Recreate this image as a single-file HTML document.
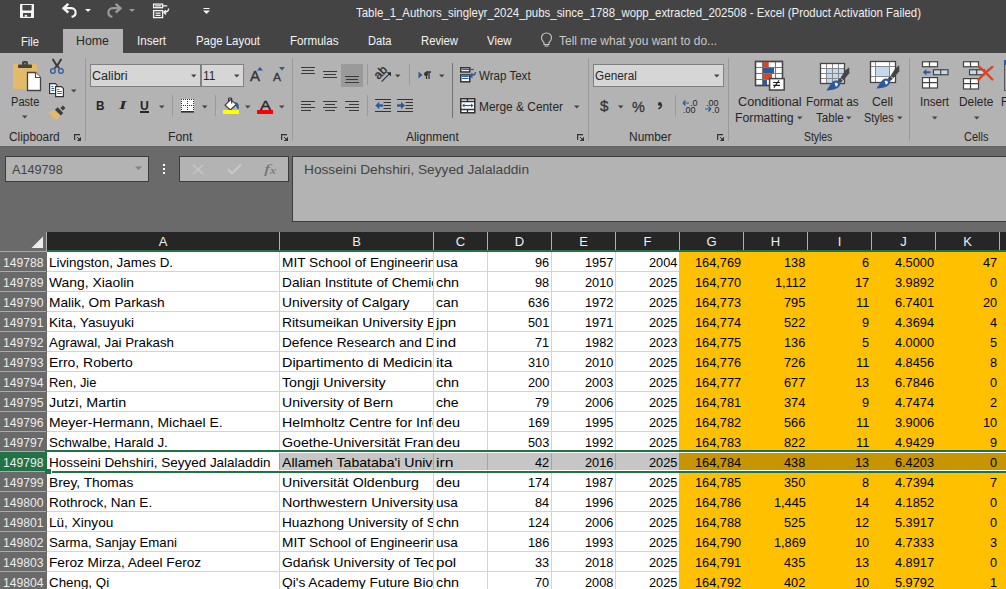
<!DOCTYPE html>
<html><head><meta charset="utf-8"><style>
html,body{margin:0;padding:0;}
body{width:1006px;height:589px;overflow:hidden;position:relative;background:#6a6a6a;font-family:"Liberation Sans",sans-serif;}
div{position:absolute;}
.t{white-space:pre;}
</style></head><body>
<div style="left:0px;top:0px;width:1006px;height:53px;background:#444444;"></div>
<svg style="position:absolute;left:20px;top:4px" width="14" height="14" viewBox="0 0 14 14"><rect x="0" y="0" width="14" height="14" rx="0.5" fill="#f4f4f4"/>
<path d="M2.4 1H11.6V5.4Q11.6 6.4 10.6 6.4H3.4Q2.4 6.4 2.4 5.4Z" fill="#444"/>
<rect x="3" y="9" width="8" height="3.8" fill="#444"/>
<rect x="4.7" y="10.9" width="2.4" height="1.9" fill="#f4f4f4"/></svg>
<svg style="position:absolute;left:62px;top:2px" width="16" height="17" viewBox="0 0 16 17"><path d="M3 6.2H9.3C11.9 6.2 13.6 8.2 13.6 10.4C13.6 12.7 12 14.4 9.6 14.9" fill="none" stroke="#f4f4f4" stroke-width="2.2"/>
<path d="M6.3 1.8L1.6 6.2L6.3 10.6" fill="none" stroke="#f4f4f4" stroke-width="2.5"/></svg>
<svg style="position:absolute;left:85px;top:9px" width="7" height="4" viewBox="0 0 7 4"><path d="M0 0H6L3 3Z" fill="#f4f4f4"/></svg>
<svg style="position:absolute;left:106px;top:2px" width="16" height="17" viewBox="0 0 16 17"><path d="M13 6.2H6.7C4.1 6.2 2.4 8.2 2.4 10.4C2.4 12.7 4 14.4 6.4 14.9" fill="none" stroke="#9a9a9a" stroke-width="2.2"/>
<path d="M9.7 1.8L14.4 6.2L9.7 10.6" fill="none" stroke="#9a9a9a" stroke-width="2.5"/></svg>
<svg style="position:absolute;left:129px;top:9px" width="7" height="4" viewBox="0 0 7 4"><path d="M0 0H6L3 3Z" fill="#9a9a9a"/></svg>
<svg style="position:absolute;left:152px;top:3px" width="18" height="16" viewBox="0 0 18 16"><rect x="1.6" y="1.1" width="9" height="3.6" fill="none" stroke="#f4f4f4" stroke-width="1.3"/>
<path d="M3.2 2.9H9M10.5 2.9H15.2" stroke="#f4f4f4" stroke-width="1.2"/>
<rect x="1.6" y="7.6" width="9" height="7" fill="none" stroke="#f4f4f4" stroke-width="1.3"/>
<path d="M3.5 10.1H8.6M3.5 12.3H8.6" stroke="#f4f4f4" stroke-width="1.2"/>
<path d="M16.6 5.5C16.6 8.4 15.2 9.3 12 9.3M14 7.1L11.8 9.3L14 11.5" fill="none" stroke="#f4f4f4" stroke-width="1.3"/></svg>
<svg style="position:absolute;left:203px;top:7px" width="7" height="8" viewBox="0 0 7 8"><path d="M0.5 1.5H6.5" stroke="#f4f4f4" stroke-width="1"/><path d="M0 3.5H7L3.5 7Z" fill="#f4f4f4"/></svg>
<div class="t" style="left:356.00px;top:7.16px;font-size:12.8px;line-height:12.8px;color:#f0f0f0;font-family:'Liberation Sans';font-weight:normal;font-style:normal;transform:scaleX(0.8924);transform-origin:0 0;">Table_1_Authors_singleyr_2024_pubs_since_1788_wopp_extracted_202508 - Excel (Product Activation Failed)</div>
<div style="left:63px;top:29px;width:60px;height:24px;background:#b3b3b3;"></div>
<div class="t" style="left:21.00px;top:35.84px;font-size:12px;line-height:12px;color:#f4f4f4;font-family:'Liberation Sans';font-weight:normal;font-style:normal;transform:scaleX(0.9305);transform-origin:0 0;">File</div>
<div class="t" style="left:76.00px;top:34.84px;font-size:12px;line-height:12px;color:#262626;font-family:'Liberation Sans';font-weight:normal;font-style:normal;transform:scaleX(1.0307);transform-origin:0 0;">Home</div>
<div class="t" style="left:136.70px;top:34.84px;font-size:12px;line-height:12px;color:#f4f4f4;font-family:'Liberation Sans';font-weight:normal;font-style:normal;transform:scaleX(0.9662);transform-origin:0 0;">Insert</div>
<div class="t" style="left:196.00px;top:34.84px;font-size:12px;line-height:12px;color:#f4f4f4;font-family:'Liberation Sans';font-weight:normal;font-style:normal;transform:scaleX(0.9497);transform-origin:0 0;">Page Layout</div>
<div class="t" style="left:290.00px;top:34.84px;font-size:12px;line-height:12px;color:#f4f4f4;font-family:'Liberation Sans';font-weight:normal;font-style:normal;transform:scaleX(0.9697);transform-origin:0 0;">Formulas</div>
<div class="t" style="left:368.00px;top:34.84px;font-size:12px;line-height:12px;color:#f4f4f4;font-family:'Liberation Sans';font-weight:normal;font-style:normal;transform:scaleX(0.9267);transform-origin:0 0;">Data</div>
<div class="t" style="left:421.00px;top:34.84px;font-size:12px;line-height:12px;color:#f4f4f4;font-family:'Liberation Sans';font-weight:normal;font-style:normal;transform:scaleX(0.9401);transform-origin:0 0;">Review</div>
<div class="t" style="left:487.00px;top:34.84px;font-size:12px;line-height:12px;color:#f4f4f4;font-family:'Liberation Sans';font-weight:normal;font-style:normal;transform:scaleX(0.9497);transform-origin:0 0;">View</div>
<svg style="position:absolute;left:540px;top:32px" width="13" height="16" viewBox="0 0 13 16"><path d="M6.5 1C3.5 1 1.5 3.2 1.5 6C1.5 8.2 3 9.3 4 10.5V12.5H9V10.5C10 9.3 11.5 8.2 11.5 6C11.5 3.2 9.5 1 6.5 1Z" fill="none" stroke="#c8c8c8" stroke-width="1.1"/>
<path d="M4.5 14H8.5" stroke="#c8c8c8" stroke-width="1.1"/></svg>
<div class="t" style="left:559.00px;top:34.84px;font-size:12px;line-height:12px;color:#c8c8c8;font-family:'Liberation Sans';font-weight:normal;font-style:normal;">Tell me what you want to do...</div>
<div style="left:0px;top:53px;width:1006px;height:93px;background:#b3b3b3;"></div>
<div style="left:85px;top:58px;width:1px;height:83px;background:#999999;"></div>
<div style="left:292px;top:58px;width:1px;height:83px;background:#999999;"></div>
<div style="left:588px;top:58px;width:1px;height:83px;background:#999999;"></div>
<div style="left:728px;top:58px;width:1px;height:83px;background:#999999;"></div>
<div style="left:909px;top:58px;width:1px;height:83px;background:#999999;"></div>
<div class="t" style="left:8.70px;top:130.84px;font-size:12px;line-height:12px;color:#262626;font-family:'Liberation Sans';font-weight:normal;font-style:normal;transform:scaleX(0.9869);transform-origin:0 0;">Clipboard</div>
<div class="t" style="left:168.20px;top:130.84px;font-size:12px;line-height:12px;color:#262626;font-family:'Liberation Sans';font-weight:normal;font-style:normal;transform:scaleX(1.0202);transform-origin:0 0;">Font</div>
<div class="t" style="left:406.00px;top:130.84px;font-size:12px;line-height:12px;color:#262626;font-family:'Liberation Sans';font-weight:normal;font-style:normal;transform:scaleX(0.9874);transform-origin:0 0;">Alignment</div>
<div class="t" style="left:629.20px;top:130.84px;font-size:12px;line-height:12px;color:#262626;font-family:'Liberation Sans';font-weight:normal;font-style:normal;transform:scaleX(0.9956);transform-origin:0 0;">Number</div>
<div class="t" style="left:804.30px;top:130.84px;font-size:12px;line-height:12px;color:#262626;font-family:'Liberation Sans';font-weight:normal;font-style:normal;transform:scaleX(0.8658);transform-origin:0 0;">Styles</div>
<div class="t" style="left:964.20px;top:130.84px;font-size:12px;line-height:12px;color:#262626;font-family:'Liberation Sans';font-weight:normal;font-style:normal;transform:scaleX(0.9148);transform-origin:0 0;">Cells</div>
<svg style="position:absolute;left:74px;top:134px" width="8" height="8" viewBox="0 0 8 8"><path d="M0.6 6V0.6H6" fill="none" stroke="#333" stroke-width="1.2"/><path d="M7 2.8V7H2.8Z" fill="#333"/><path d="M3 3L7 7" stroke="#333" stroke-width="1"/></svg>
<svg style="position:absolute;left:281px;top:134px" width="8" height="8" viewBox="0 0 8 8"><path d="M0.6 6V0.6H6" fill="none" stroke="#333" stroke-width="1.2"/><path d="M7 2.8V7H2.8Z" fill="#333"/><path d="M3 3L7 7" stroke="#333" stroke-width="1"/></svg>
<svg style="position:absolute;left:577px;top:134px" width="8" height="8" viewBox="0 0 8 8"><path d="M0.6 6V0.6H6" fill="none" stroke="#333" stroke-width="1.2"/><path d="M7 2.8V7H2.8Z" fill="#333"/><path d="M3 3L7 7" stroke="#333" stroke-width="1"/></svg>
<svg style="position:absolute;left:717px;top:134px" width="8" height="8" viewBox="0 0 8 8"><path d="M0.6 6V0.6H6" fill="none" stroke="#333" stroke-width="1.2"/><path d="M7 2.8V7H2.8Z" fill="#333"/><path d="M3 3L7 7" stroke="#333" stroke-width="1"/></svg>
<svg style="position:absolute;left:10px;top:58px" width="34" height="36" viewBox="0 0 34 36"><rect x="3" y="6" width="24" height="25" rx="1.2" fill="#e3b96a"/>
<rect x="8" y="6.5" width="14" height="3.5" rx="1" fill="#444"/>
<rect x="12" y="3" width="6" height="4.5" rx="1.5" fill="#444"/>
<circle cx="15" cy="5.6" r="0.9" fill="#888"/>
<path d="M17.5 14.5H25.5L30.5 19.5V32.5H17.5Z" fill="#fff" stroke="#444" stroke-width="1.3"/>
<path d="M25.5 14.5V19.5H30.5" fill="#fff" stroke="#444" stroke-width="1.1"/></svg>
<div class="t" style="left:10.70px;top:95.84px;font-size:12px;line-height:12px;color:#262626;font-family:'Liberation Sans';font-weight:normal;font-style:normal;transform:scaleX(0.9222);transform-origin:0 0;">Paste</div>
<svg style="position:absolute;left:22px;top:115px" width="6" height="4" viewBox="0 0 6 4"><path d="M0 0.5H5.5L2.75 3.5Z" fill="#444"/></svg>
<svg style="position:absolute;left:45px;top:55px" width="25" height="25" viewBox="0 0 25 25"><path d="M8 4.5L12.3 11.5M16 4.5L11.7 11.5" stroke="#3a3a3a" stroke-width="2" stroke-linecap="round"/>
<path d="M12 10.5L9.5 13.5M12 10.5L14.5 13.5" stroke="#3a3a3a" stroke-width="1.6"/>
<circle cx="7.9" cy="16" r="2.3" fill="none" stroke="#2b5a9e" stroke-width="1.3"/>
<circle cx="15.9" cy="16" r="2.3" fill="none" stroke="#2b5a9e" stroke-width="1.3"/></svg>
<svg style="position:absolute;left:49px;top:83px" width="16" height="15" viewBox="0 0 16 15"><path d="M0.6 0.6H6.4L8 2.2V10.5H0.6Z" fill="#fff" stroke="#333" stroke-width="1.2"/>
<path d="M2.3 3.5H4.3M2.3 5.5H5.3M2.3 7.5H5.3" stroke="#2b5a9e" stroke-width="0.9"/>
<path d="M6.6 3.6H12.4L14.4 5.6V13.6H6.6Z" fill="#fff" stroke="#333" stroke-width="1.2"/>
<path d="M8.2 6.5H10.3M8.2 8.5H12.8M8.2 10.5H12.8" stroke="#2b5a9e" stroke-width="0.9"/></svg>
<svg style="position:absolute;left:71px;top:89px" width="6" height="4" viewBox="0 0 6 4"><path d="M0 0.5H5.5L2.75 3.5Z" fill="#444"/></svg>
<svg style="position:absolute;left:44px;top:100px" width="26" height="22" viewBox="0 0 26 22"><path d="M16.4 8L18.9 5.5L21.4 8L18.8 10.6Z" fill="#3d3d3d"/>
<path d="M10.9 9.7L13.7 7.3L19.3 12.9L16.8 15.6Z" fill="#3d3d3d"/>
<path d="M5 12.3L10.5 10.2L16.5 16.1L12.4 20.2L11.4 18.6L9.8 19L6.8 15.5Z" fill="#e3b96a"/></svg>
<div style="left:90px;top:64px;width:111px;height:23px;background:#808080;"></div>
<div style="left:91px;top:65px;width:109px;height:21px;background:#d6d6d6;"></div>
<div style="left:201px;top:64px;width:43px;height:23px;background:#808080;"></div>
<div style="left:202px;top:65px;width:41px;height:21px;background:#d6d6d6;"></div>
<div class="t" style="left:92.20px;top:69.84px;font-size:12px;line-height:12px;color:#262626;font-family:'Liberation Sans';font-weight:normal;font-style:normal;transform:scaleX(1.0466);transform-origin:0 0;">Calibri</div>
<svg style="position:absolute;left:191px;top:74px" width="6" height="4" viewBox="0 0 6 4"><path d="M0 0.5H5.5L2.75 3.5Z" fill="#444"/></svg>
<div class="t" style="left:203.20px;top:69.84px;font-size:12px;line-height:12px;color:#262626;font-family:'Liberation Sans';font-weight:normal;font-style:normal;transform:scaleX(0.9945);transform-origin:0 0;">11</div>
<svg style="position:absolute;left:234px;top:74px" width="6" height="4" viewBox="0 0 6 4"><path d="M0 0.5H5.5L2.75 3.5Z" fill="#444"/></svg>
<div class="t" style="left:249.50px;top:69.15px;font-size:14px;line-height:14px;color:#333;font-family:'Liberation Sans';font-weight:normal;font-style:normal;transform:scaleX(1.0702);transform-origin:0 0;-webkit-text-stroke:0.35px #333;">A</div>
<svg style="position:absolute;left:257px;top:67px" width="7" height="4" viewBox="0 0 7 4"><path d="M0 3.5H6L3 0Z" fill="#2b5a9e"/></svg>
<div class="t" style="left:272.50px;top:71.69px;font-size:11px;line-height:11px;color:#333;font-family:'Liberation Sans';font-weight:normal;font-style:normal;transform:scaleX(1.0894);transform-origin:0 0;-webkit-text-stroke:0.3px #333;">A</div>
<svg style="position:absolute;left:279px;top:67px" width="7" height="4" viewBox="0 0 7 4"><path d="M0 0H6L3 3.5Z" fill="#2b5a9e"/></svg>
<div class="t" style="left:96.00px;top:99.84px;font-size:12px;line-height:12px;color:#262626;font-family:'Liberation Sans';font-weight:bold;font-style:normal;transform:scaleX(0.9802);transform-origin:0 0;">B</div>
<div class="t" style="left:118.50px;top:99.42px;font-size:12.5px;line-height:12.5px;color:#262626;font-family:'Liberation Serif';font-weight:bold;font-style:italic;transform:scaleX(1.5385);transform-origin:0 0;">I</div>
<div class="t" style="left:140.00px;top:99.84px;font-size:12px;line-height:12px;color:#262626;font-family:'Liberation Sans';font-weight:bold;font-style:normal;transform:scaleX(1.0148);transform-origin:0 0;">U</div>
<div style="left:140px;top:111px;width:9px;height:1.5px;background:#262626;"></div>
<svg style="position:absolute;left:159px;top:105px" width="6" height="4" viewBox="0 0 6 4"><path d="M0 0.5H5.5L2.75 3.5Z" fill="#444"/></svg>
<div style="left:172px;top:95px;width:1px;height:21px;background:#999999;"></div>
<svg style="position:absolute;left:180px;top:98px" width="15" height="15" viewBox="0 0 15 15"><rect x="1" y="1" width="13" height="13" fill="#fff"/><rect x="1" y="1" width="1" height="1" fill="#333"/><rect x="1" y="3" width="1" height="1" fill="#333"/><rect x="1" y="5" width="1" height="1" fill="#333"/><rect x="1" y="7" width="1" height="1" fill="#333"/><rect x="1" y="9" width="1" height="1" fill="#333"/><rect x="1" y="11" width="1" height="1" fill="#333"/><rect x="3" y="1" width="1" height="1" fill="#333"/><rect x="3" y="7" width="1" height="1" fill="#333"/><rect x="5" y="1" width="1" height="1" fill="#333"/><rect x="5" y="7" width="1" height="1" fill="#333"/><rect x="7" y="1" width="1" height="1" fill="#333"/><rect x="7" y="3" width="1" height="1" fill="#333"/><rect x="7" y="5" width="1" height="1" fill="#333"/><rect x="7" y="7" width="1" height="1" fill="#333"/><rect x="7" y="9" width="1" height="1" fill="#333"/><rect x="7" y="11" width="1" height="1" fill="#333"/><rect x="9" y="1" width="1" height="1" fill="#333"/><rect x="9" y="7" width="1" height="1" fill="#333"/><rect x="11" y="1" width="1" height="1" fill="#333"/><rect x="11" y="7" width="1" height="1" fill="#333"/><rect x="13" y="1" width="1" height="1" fill="#333"/><rect x="13" y="3" width="1" height="1" fill="#333"/><rect x="13" y="5" width="1" height="1" fill="#333"/><rect x="13" y="7" width="1" height="1" fill="#333"/><rect x="13" y="9" width="1" height="1" fill="#333"/><rect x="13" y="11" width="1" height="1" fill="#333"/><rect x="1" y="13" width="13" height="1.6" fill="#333"/></svg>
<svg style="position:absolute;left:202px;top:105px" width="6" height="4" viewBox="0 0 6 4"><path d="M0 0.5H5.5L2.75 3.5Z" fill="#444"/></svg>
<div style="left:215px;top:95px;width:1px;height:21px;background:#999999;"></div>
<svg style="position:absolute;left:220px;top:94px" width="22" height="22" viewBox="0 0 22 22"><path d="M5.1 11.2L10.6 5.7L16.3 10.4L10.3 15.9Z" fill="#fff" stroke="#333" stroke-width="1.1"/>
<path d="M8.6 7.8V4.8Q8.6 4 9.4 4H10.9Q11.7 4 11.7 4.8V9.6" fill="none" stroke="#333" stroke-width="1.2"/>
<path d="M15.2 8C18 8.3 19.5 11 18.6 15.3C17.2 15 16.2 13 15.8 11.3Z" fill="#2b5a9e"/>
<rect x="3" y="16" width="16" height="4" fill="#ffff00"/></svg>
<svg style="position:absolute;left:245px;top:105px" width="6" height="4" viewBox="0 0 6 4"><path d="M0 0.5H5.5L2.75 3.5Z" fill="#444"/></svg>
<div class="t" style="left:259.50px;top:99.00px;font-size:13px;line-height:13px;color:#262626;font-family:'Liberation Sans';font-weight:normal;font-style:normal;transform:scaleX(1.2685);transform-origin:0 0;-webkit-text-stroke:0.35px #262626;">A</div>
<div style="left:257px;top:110px;width:16px;height:4px;background:#ff0000;"></div>
<svg style="position:absolute;left:279px;top:105px" width="6" height="4" viewBox="0 0 6 4"><path d="M0 0.5H5.5L2.75 3.5Z" fill="#444"/></svg>
<div style="left:341px;top:64px;width:22px;height:23px;background:#9a9a9a;"></div>
<div style="left:301px;top:67px;width:14px;height:1px;background:#3a3a3a;"></div>
<div style="left:302px;top:70px;width:12px;height:1px;background:#3a3a3a;"></div>
<div style="left:301px;top:73px;width:14px;height:1px;background:#3a3a3a;"></div>
<div style="left:323px;top:71px;width:14px;height:1px;background:#3a3a3a;"></div>
<div style="left:324px;top:74px;width:12px;height:1px;background:#3a3a3a;"></div>
<div style="left:323px;top:77px;width:14px;height:1px;background:#3a3a3a;"></div>
<div style="left:345px;top:76px;width:14px;height:1px;background:#3a3a3a;"></div>
<div style="left:346px;top:79px;width:12px;height:1px;background:#3a3a3a;"></div>
<div style="left:345px;top:82px;width:14px;height:1px;background:#3a3a3a;"></div>
<div style="left:367px;top:64px;width:1px;height:21px;background:#999999;"></div>
<svg style="position:absolute;left:370px;top:62px" width="24" height="24" viewBox="0 0 24 24"><g transform="translate(8.5 18) rotate(-45)"><text x="0" y="0" font-family="Liberation Sans" font-size="12" fill="#2a2a2a" stroke="#2a2a2a" stroke-width="0.35">ab</text></g>
<path d="M11.6 19.6L19.8 11.4" stroke="#2a2a2a" stroke-width="1.1"/><path d="M16.6 10.2H21V14.6Z" fill="#2a2a2a"/></svg>
<svg style="position:absolute;left:395px;top:74px" width="6" height="4" viewBox="0 0 6 4"><path d="M0 0.5H5.5L2.75 3.5Z" fill="#444"/></svg>
<div style="left:409px;top:64px;width:1px;height:21px;background:#999999;"></div>
<svg style="position:absolute;left:418px;top:71px" width="14" height="9" viewBox="0 0 14 9"><path d="M0.5 0.5L4.5 4L0.5 7.5Z" fill="#2b5a9e"/>
<path d="M8 1H13M8.5 1V8M11 1V8" stroke="#333" stroke-width="1.3"/><circle cx="8" cy="3" r="2" fill="#333"/></svg>
<svg style="position:absolute;left:439px;top:74px" width="6" height="4" viewBox="0 0 6 4"><path d="M0 0.5H5.5L2.75 3.5Z" fill="#444"/></svg>
<div style="left:301px;top:101px;width:14px;height:1px;background:#3a3a3a;"></div>
<div style="left:301px;top:104px;width:10px;height:1px;background:#3a3a3a;"></div>
<div style="left:301px;top:107px;width:14px;height:1px;background:#3a3a3a;"></div>
<div style="left:301px;top:110px;width:10px;height:1px;background:#3a3a3a;"></div>
<div style="left:323px;top:101px;width:14px;height:1px;background:#3a3a3a;"></div>
<div style="left:325px;top:104px;width:10px;height:1px;background:#3a3a3a;"></div>
<div style="left:323px;top:107px;width:14px;height:1px;background:#3a3a3a;"></div>
<div style="left:325px;top:110px;width:10px;height:1px;background:#3a3a3a;"></div>
<div style="left:345px;top:101px;width:14px;height:1px;background:#3a3a3a;"></div>
<div style="left:349px;top:104px;width:10px;height:1px;background:#3a3a3a;"></div>
<div style="left:345px;top:107px;width:14px;height:1px;background:#3a3a3a;"></div>
<div style="left:349px;top:110px;width:10px;height:1px;background:#3a3a3a;"></div>
<div style="left:367px;top:95px;width:1px;height:21px;background:#999999;"></div>
<svg style="position:absolute;left:375px;top:99px" width="17" height="14" viewBox="0 0 17 14"><path d="M0 0.5H16M8.5 3.5H16M8.5 6.5H16M8.5 9.5H16M0 12.5H16" stroke="#333" stroke-width="1"/>
<path d="M3.5 6.5H8" stroke="#2b5a9e" stroke-width="2.4"/><path d="M0.3 6.5L4.3 2.8V10.2Z" fill="#2b5a9e"/></svg>
<svg style="position:absolute;left:397px;top:99px" width="17" height="14" viewBox="0 0 17 14"><path d="M0 0.5H16M8.5 3.5H16M8.5 6.5H16M8.5 9.5H16M0 12.5H16" stroke="#333" stroke-width="1"/>
<path d="M0 6.5H4.5" stroke="#2b5a9e" stroke-width="2.4"/><path d="M8 6.5L4 2.8V10.2Z" fill="#2b5a9e"/></svg>
<div style="left:452px;top:63px;width:1px;height:55px;background:#707070;"></div>
<svg style="position:absolute;left:459px;top:66px" width="18" height="17" viewBox="0 0 18 17"><rect x="1.75" y="1.75" width="9" height="4.2" fill="#fff" stroke="#333" stroke-width="1.5"/>
<path d="M3 3.5H15" stroke="#2b5a9e" stroke-width="1.2"/>
<rect x="1.75" y="8.9" width="9" height="6.9" fill="#fff" stroke="#333" stroke-width="1.5"/>
<path d="M3 10.5H9.5M3 12.5H9.5" stroke="#2b5a9e" stroke-width="1"/>
<path d="M16.5 6C16.5 8.5 15 9.5 11.5 9.5M13.5 7.3L11.2 9.5L13.5 11.7" fill="none" stroke="#2b5a9e" stroke-width="1.4"/></svg>
<div class="t" style="left:478.70px;top:69.84px;font-size:12px;line-height:12px;color:#262626;font-family:'Liberation Sans';font-weight:normal;font-style:normal;transform:scaleX(0.9631);transform-origin:0 0;">Wrap Text</div>
<svg style="position:absolute;left:459px;top:97px" width="17" height="17" viewBox="0 0 17 17"><rect x="1.75" y="1.75" width="14" height="14" fill="#fff" stroke="#333" stroke-width="1.5"/>
<path d="M1.5 4.5H16M1.5 12.5H16M8.5 1.5V4.5M8.5 12.5V16" stroke="#333" stroke-width="1.4"/>
<path d="M4 8.5H13.5" stroke="#2b5a9e" stroke-width="1.2"/><path d="M3 8.5L5.5 6.5V10.5Z M14.5 8.5L12 6.5V10.5Z" fill="#2b5a9e"/></svg>
<div class="t" style="left:479.20px;top:100.84px;font-size:12px;line-height:12px;color:#262626;font-family:'Liberation Sans';font-weight:normal;font-style:normal;transform:scaleX(0.9917);transform-origin:0 0;">Merge &amp; Center</div>
<svg style="position:absolute;left:574px;top:105px" width="6" height="4" viewBox="0 0 6 4"><path d="M0 0.5H5.5L2.75 3.5Z" fill="#444"/></svg>
<div style="left:593px;top:64px;width:131px;height:23px;background:#808080;"></div>
<div style="left:594px;top:65px;width:129px;height:21px;background:#d6d6d6;"></div>
<div class="t" style="left:595.20px;top:69.84px;font-size:12px;line-height:12px;color:#262626;font-family:'Liberation Sans';font-weight:normal;font-style:normal;transform:scaleX(0.9789);transform-origin:0 0;">General</div>
<svg style="position:absolute;left:714px;top:74px" width="6" height="4" viewBox="0 0 6 4"><path d="M0 0.5H5.5L2.75 3.5Z" fill="#444"/></svg>
<div class="t" style="left:600.00px;top:98.30px;font-size:15px;line-height:15px;color:#333;font-family:'Liberation Sans';font-weight:normal;font-style:normal;transform:scaleX(1.0187);transform-origin:0 0;-webkit-text-stroke:0.3px #333;">$</div>
<svg style="position:absolute;left:618px;top:105px" width="6" height="4" viewBox="0 0 6 4"><path d="M0 0.5H5.5L2.75 3.5Z" fill="#444"/></svg>
<div class="t" style="left:632.00px;top:98.88px;font-size:15.5px;line-height:15.5px;color:#333;font-family:'Liberation Sans';font-weight:normal;font-style:normal;transform:scaleX(0.9277);transform-origin:0 0;-webkit-text-stroke:0.3px #333;">%</div>
<svg style="position:absolute;left:656px;top:101px" width="8" height="9" viewBox="0 0 8 9"><circle cx="3.8" cy="2.9" r="1.9" fill="#333"/><path d="M5.4 3C5.6 5.5 4.5 7 2.3 7.8" fill="none" stroke="#333" stroke-width="1.5"/></svg>
<div style="left:675px;top:95px;width:1px;height:21px;background:#999999;"></div>
<svg style="position:absolute;left:682px;top:99px" width="16" height="14" viewBox="0 0 16 14"><path d="M1 4H7M1 4L3.5 1.5M1 4L3.5 6.5" fill="none" stroke="#2b5a9e" stroke-width="1.2"/>
<text x="8" y="7" font-family="Liberation Sans" font-size="9" fill="#262626">.0</text>
<text x="1" y="13.5" font-family="Liberation Sans" font-size="9" fill="#262626">.00</text></svg>
<svg style="position:absolute;left:704px;top:99px" width="16" height="14" viewBox="0 0 16 14"><text x="2" y="7" font-family="Liberation Sans" font-size="9" fill="#262626">.00</text>
<path d="M1 10H7M7 10L4.5 7.5M7 10L4.5 12.5" fill="none" stroke="#2b5a9e" stroke-width="1.2"/>
<text x="8" y="13.5" font-family="Liberation Sans" font-size="9" fill="#262626">.0</text></svg>
<svg style="position:absolute;left:754px;top:60px" width="32" height="32" viewBox="0 0 32 32"><rect x="1.5" y="1.5" width="27" height="24" fill="#fff" stroke="#444" stroke-width="1.3"/>
<path d="M1.5 7.5H28.5M1.5 13.5H28.5M1.5 19.5H28.5M8.5 1.5V25.5M21.5 1.5V25.5" stroke="#777" stroke-width="1.1"/>
<path d="M1.5 1.5H28.5V25.5H1.5Z" fill="none" stroke="#444" stroke-width="1.3"/>
<rect x="9" y="2" width="5.7" height="5" fill="#d24726"/>
<rect x="9" y="8" width="11" height="5" fill="#2b5a9e"/>
<rect x="9" y="14" width="9" height="5" fill="#d24726"/>
<rect x="9" y="20" width="4" height="5.5" fill="#2b5a9e"/>
<rect x="15.6" y="18.6" width="14.6" height="11.4" fill="#fff" stroke="#444" stroke-width="1.5"/>
<path d="M19.2 22.5H26M19.2 25.4H26M25 20.2L19.9 27.6" stroke="#222" stroke-width="1.1"/></svg>
<div class="t" style="left:738.30px;top:95.84px;font-size:12px;line-height:12px;color:#262626;font-family:'Liberation Sans';font-weight:normal;font-style:normal;transform:scaleX(1.0592);transform-origin:0 0;">Conditional</div>
<div class="t" style="left:735.40px;top:111.84px;font-size:12px;line-height:12px;color:#262626;font-family:'Liberation Sans';font-weight:normal;font-style:normal;transform:scaleX(1.0216);transform-origin:0 0;">Formatting</div>
<svg style="position:absolute;left:797px;top:116px" width="6" height="4" viewBox="0 0 6 4"><path d="M0 0.5H5.5L2.75 3.5Z" fill="#444"/></svg>
<svg style="position:absolute;left:819px;top:62px" width="32" height="31" viewBox="0 0 32 31"><rect x="1.5" y="1.5" width="24" height="20" fill="#fff"/><rect x="7" y="6" width="6" height="5" fill="#c5d9ee"/><rect x="7" y="11" width="6" height="5" fill="#c5d9ee"/><rect x="7" y="16" width="6" height="5" fill="#c5d9ee"/><rect x="13" y="6" width="6" height="5" fill="#c5d9ee"/><rect x="13" y="11" width="6" height="5" fill="#c5d9ee"/><rect x="13" y="16" width="6" height="5" fill="#c5d9ee"/><rect x="19" y="6" width="6" height="5" fill="#c5d9ee"/><rect x="19" y="11" width="6" height="5" fill="#c5d9ee"/><rect x="19" y="16" width="6" height="5" fill="#c5d9ee"/>
<path d="M1.5 6.5H25.5M1.5 11.5H25.5M1.5 16.5H25.5M7.5 1.5V21.5M13.5 1.5V21.5M19.5 1.5V21.5" stroke="#888" stroke-width="1"/>
<rect x="1.5" y="1.5" width="24" height="20" fill="none" stroke="#444" stroke-width="1.3"/>
<path d="M26.5 8.3L30.2 5.2L30.3 11.2L24.3 18.2L21.7 15.6Z" fill="#444"/>
<path d="M21.2 16.1L23.8 18.7L21.4 21.1L18.8 18.5Z" fill="#444"/>
<path d="M13.6 20C16.5 17.6 20.7 18.3 21.2 21.8C21.5 24.7 17.5 28.3 7.4 28.6C9.5 25.5 11.2 22 13.6 20Z" fill="#2b5a9e"/>
<path d="M15.6 21.2C17 20.4 18.8 20.9 19 22.4C18.5 23.6 17.6 24.3 16.8 24.6C16.5 23.5 16 22.6 15.6 21.2Z" fill="#fff"/></svg>
<div class="t" style="left:806.40px;top:95.84px;font-size:12px;line-height:12px;color:#262626;font-family:'Liberation Sans';font-weight:normal;font-style:normal;transform:scaleX(0.9756);transform-origin:0 0;">Format as</div>
<div class="t" style="left:816.00px;top:111.84px;font-size:12px;line-height:12px;color:#262626;font-family:'Liberation Sans';font-weight:normal;font-style:normal;transform:scaleX(0.9691);transform-origin:0 0;">Table</div>
<svg style="position:absolute;left:846px;top:116px" width="6" height="4" viewBox="0 0 6 4"><path d="M0 0.5H5.5L2.75 3.5Z" fill="#444"/></svg>
<svg style="position:absolute;left:869px;top:60px" width="32" height="31" viewBox="0 0 32 31"><rect x="1.5" y="1.5" width="25" height="21" fill="#fff"/>
<rect x="6.5" y="6.5" width="14" height="10" fill="#c5d9ee"/>
<path d="M1.5 6.5H26.5M1.5 16.5H26.5M6.5 1.5V22.5M20.5 1.5V22.5" stroke="#888" stroke-width="1"/>
<rect x="1.5" y="1.5" width="25" height="21" fill="none" stroke="#444" stroke-width="1.3"/>
<path d="M26.5 8.3L30.2 5.2L30.3 11.2L24.3 18.2L21.7 15.6Z" fill="#444"/>
<path d="M21.2 16.1L23.8 18.7L21.4 21.1L18.8 18.5Z" fill="#444"/>
<path d="M13.6 20C16.5 17.6 20.7 18.3 21.2 21.8C21.5 24.7 17.5 28.3 7.4 28.6C9.5 25.5 11.2 22 13.6 20Z" fill="#2b5a9e"/>
<path d="M15.6 21.2C17 20.4 18.8 20.9 19 22.4C18.5 23.6 17.6 24.3 16.8 24.6C16.5 23.5 16 22.6 15.6 21.2Z" fill="#fff"/></svg>
<div class="t" style="left:872.00px;top:95.84px;font-size:12px;line-height:12px;color:#262626;font-family:'Liberation Sans';font-weight:normal;font-style:normal;transform:scaleX(1.0110);transform-origin:0 0;">Cell</div>
<div class="t" style="left:864.40px;top:111.84px;font-size:12px;line-height:12px;color:#262626;font-family:'Liberation Sans';font-weight:normal;font-style:normal;transform:scaleX(0.9055);transform-origin:0 0;">Styles</div>
<svg style="position:absolute;left:897px;top:116px" width="6" height="4" viewBox="0 0 6 4"><path d="M0 0.5H5.5L2.75 3.5Z" fill="#444"/></svg>
<svg style="position:absolute;left:921px;top:60px" width="30" height="30" viewBox="0 0 30 30"><rect x="1.5" y="1.75" width="15" height="5" fill="#fff" stroke="#444" stroke-width="1.2"/><path d="M8.5 1.5V7" stroke="#444" stroke-width="1.2"/>
<rect x="12.5" y="9.75" width="14.5" height="5" fill="#c5d9ee" stroke="#444" stroke-width="1.2"/><path d="M19.7 9.5V15" stroke="#444" stroke-width="1.2"/>
<path d="M4 12.3H9.5" stroke="#2b5a9e" stroke-width="2"/><path d="M1.8 12.3L5.3 9V15.6Z" fill="#2b5a9e"/>
<rect x="1.5" y="17.6" width="15" height="10.4" fill="#fff" stroke="#444" stroke-width="1.2"/><path d="M8.5 17.5V28M1.5 22.7H16.5" stroke="#444" stroke-width="1.2"/></svg>
<div class="t" style="left:920.00px;top:95.84px;font-size:12px;line-height:12px;color:#262626;font-family:'Liberation Sans';font-weight:normal;font-style:normal;transform:scaleX(0.9662);transform-origin:0 0;">Insert</div>
<svg style="position:absolute;left:932px;top:116px" width="6" height="4" viewBox="0 0 6 4"><path d="M0 0.5H5.5L2.75 3.5Z" fill="#444"/></svg>
<svg style="position:absolute;left:962px;top:60px" width="32" height="30" viewBox="0 0 32 30"><rect x="1.5" y="1.75" width="15" height="5" fill="#fff" stroke="#444" stroke-width="1.2"/><path d="M8.5 1.5V7" stroke="#444" stroke-width="1.2"/>
<rect x="7.5" y="9.75" width="15" height="5" fill="#c5d9ee" stroke="#444" stroke-width="1.2"/><path d="M14.7 9.5V15" stroke="#444" stroke-width="1.2"/>
<rect x="1.5" y="18.6" width="15" height="10.4" fill="#fff" stroke="#444" stroke-width="1.2"/><path d="M8.5 18.5V29M1.5 23.7H16.5" stroke="#444" stroke-width="1.2"/>
<path d="M16.8 6.8C22 10.5 26 15 30.3 19.5M30.3 7C25 10.8 20.5 15 16.5 19.8" fill="none" stroke="#d24726" stroke-width="2.4" stroke-linecap="round"/></svg>
<div class="t" style="left:959.20px;top:95.84px;font-size:12px;line-height:12px;color:#262626;font-family:'Liberation Sans';font-weight:normal;font-style:normal;transform:scaleX(0.9917);transform-origin:0 0;">Delete</div>
<svg style="position:absolute;left:974px;top:116px" width="6" height="4" viewBox="0 0 6 4"><path d="M0 0.5H5.5L2.75 3.5Z" fill="#444"/></svg>
<div class="t" style="left:1000.50px;top:95.84px;font-size:12px;line-height:12px;color:#262626;font-family:'Liberation Sans';font-weight:normal;font-style:normal;transform:scaleX(0.9532);transform-origin:0 0;">F</div>
<div style="left:1004px;top:60px;width:2px;height:31px;background:#555;"></div>
<div style="left:1005px;top:65px;width:1px;height:25px;background:#a8a8a8;"></div>
<div style="left:1004px;top:60px;width:2px;height:5px;background:#2b5a9e;"></div>
<div style="left:0px;top:146px;width:1006px;height:86px;background:#6a6a6a;"></div>
<div style="left:0px;top:145px;width:1006px;height:1px;background:#b8b8b8;"></div>
<div style="left:0px;top:146px;width:1006px;height:1px;background:#636363;"></div>
<div style="left:5px;top:156px;width:144px;height:26px;background:#3c3c3c;"></div>
<div style="left:6px;top:157px;width:142px;height:24px;background:#b3b3b3;"></div>
<div class="t" style="left:12.00px;top:163.84px;font-size:12px;line-height:12px;color:#444;font-family:'Liberation Sans';font-weight:normal;font-style:normal;transform:scaleX(1.0552);transform-origin:0 0;">A149798</div>
<svg style="position:absolute;left:135px;top:166px" width="8" height="5" viewBox="0 0 8 5"><path d="M0 0.5H7L3.5 4Z" fill="#808080"/></svg>
<div style="left:163px;top:164px;width:2px;height:2px;background:#ffffff;"></div>
<div style="left:163px;top:168px;width:2px;height:2px;background:#ffffff;"></div>
<div style="left:163px;top:172px;width:2px;height:2px;background:#ffffff;"></div>
<div style="left:179px;top:156px;width:110px;height:26px;background:#3c3c3c;"></div>
<div style="left:180px;top:157px;width:108px;height:24px;background:#b3b3b3;"></div>
<svg style="position:absolute;left:192px;top:164px" width="12" height="11" viewBox="0 0 12 11"><path d="M1 1L11 10M11 1L1 10" stroke="#c8c8c8" stroke-width="1.3"/></svg>
<svg style="position:absolute;left:227px;top:163px" width="15" height="12" viewBox="0 0 15 12"><path d="M1 6L5 10.5L14 1.5" fill="none" stroke="#c8c8c8" stroke-width="2"/></svg>
<div class="t" style="left:264.00px;top:162.00px;font-size:13px;line-height:13px;color:#707070;font-family:'Liberation Serif';font-weight:normal;font-style:italic;transform:scaleX(1.6552);transform-origin:0 0;">f</div>
<div class="t" style="left:270.00px;top:165.53px;font-size:10px;line-height:10px;color:#707070;font-family:'Liberation Serif';font-weight:normal;font-style:italic;transform:scaleX(1.3474);transform-origin:0 0;">x</div>
<div style="left:292px;top:156px;width:714px;height:66px;background:#3c3c3c;"></div>
<div style="left:293px;top:157px;width:713px;height:64px;background:#b3b3b3;"></div>
<div class="t" style="left:303.50px;top:163.00px;font-size:13px;line-height:13px;color:#444;font-family:'Liberation Sans';font-weight:normal;font-style:normal;transform:scaleX(1.0519);transform-origin:0 0;">Hosseini Dehshiri, Seyyed Jalaladdin</div>
<div style="left:0px;top:232px;width:46px;height:20px;background:#6a6a6a;"></div>
<svg style="position:absolute;left:31px;top:236px" width="13" height="13" viewBox="0 0 13 13"><path d="M12 0.5V12H0.5Z" fill="#ececec"/></svg>
<div style="left:46px;top:232px;width:1px;height:20px;background:#b0b0b0;"></div>
<div style="left:47px;top:232px;width:959px;height:18px;background:#262626;"></div>
<div style="left:47px;top:250px;width:959px;height:2px;background:#217346;"></div>
<div style="left:0px;top:251px;width:46px;height:1px;background:#ababab;"></div>
<div class="t" style="left:158.66px;top:235.00px;font-size:13px;line-height:13px;color:#f0f0f0;font-family:'Liberation Sans';font-weight:normal;font-style:normal;">A</div>
<div style="left:279px;top:232px;width:1px;height:18px;background:#b0b0b0;"></div>
<div class="t" style="left:352.16px;top:235.00px;font-size:13px;line-height:13px;color:#f0f0f0;font-family:'Liberation Sans';font-weight:normal;font-style:normal;">B</div>
<div style="left:433px;top:232px;width:1px;height:18px;background:#b0b0b0;"></div>
<div class="t" style="left:455.80px;top:235.00px;font-size:13px;line-height:13px;color:#f0f0f0;font-family:'Liberation Sans';font-weight:normal;font-style:normal;">C</div>
<div style="left:487px;top:232px;width:1px;height:18px;background:#b0b0b0;"></div>
<div class="t" style="left:514.80px;top:235.00px;font-size:13px;line-height:13px;color:#f0f0f0;font-family:'Liberation Sans';font-weight:normal;font-style:normal;">D</div>
<div style="left:551px;top:232px;width:1px;height:18px;background:#b0b0b0;"></div>
<div class="t" style="left:579.16px;top:235.00px;font-size:13px;line-height:13px;color:#f0f0f0;font-family:'Liberation Sans';font-weight:normal;font-style:normal;">E</div>
<div style="left:615px;top:232px;width:1px;height:18px;background:#b0b0b0;"></div>
<div class="t" style="left:643.52px;top:235.00px;font-size:13px;line-height:13px;color:#f0f0f0;font-family:'Liberation Sans';font-weight:normal;font-style:normal;">F</div>
<div style="left:679px;top:232px;width:1px;height:18px;background:#b0b0b0;"></div>
<div class="t" style="left:706.44px;top:235.00px;font-size:13px;line-height:13px;color:#f0f0f0;font-family:'Liberation Sans';font-weight:normal;font-style:normal;">G</div>
<div style="left:743px;top:232px;width:1px;height:18px;background:#b0b0b0;"></div>
<div class="t" style="left:770.80px;top:235.00px;font-size:13px;line-height:13px;color:#f0f0f0;font-family:'Liberation Sans';font-weight:normal;font-style:normal;">H</div>
<div style="left:807px;top:232px;width:1px;height:18px;background:#b0b0b0;"></div>
<div class="t" style="left:837.69px;top:235.00px;font-size:13px;line-height:13px;color:#f0f0f0;font-family:'Liberation Sans';font-weight:normal;font-style:normal;">I</div>
<div style="left:871px;top:232px;width:1px;height:18px;background:#b0b0b0;"></div>
<div class="t" style="left:900.25px;top:235.00px;font-size:13px;line-height:13px;color:#f0f0f0;font-family:'Liberation Sans';font-weight:normal;font-style:normal;">J</div>
<div style="left:935px;top:232px;width:1px;height:18px;background:#b0b0b0;"></div>
<div class="t" style="left:963.16px;top:235.00px;font-size:13px;line-height:13px;color:#f0f0f0;font-family:'Liberation Sans';font-weight:normal;font-style:normal;">K</div>
<div style="left:999px;top:232px;width:1px;height:18px;background:#b0b0b0;"></div>
<div class="t" style="left:1027.88px;top:235.00px;font-size:13px;line-height:13px;color:#f0f0f0;font-family:'Liberation Sans';font-weight:normal;font-style:normal;">L</div>
<div style="left:47px;top:252px;width:959px;height:337px;background:#ffffff;"></div>
<div style="left:47px;top:271px;width:632px;height:1px;background:#d4d4d4;"></div>
<div style="left:47px;top:291px;width:632px;height:1px;background:#d4d4d4;"></div>
<div style="left:47px;top:311px;width:632px;height:1px;background:#d4d4d4;"></div>
<div style="left:47px;top:331px;width:632px;height:1px;background:#d4d4d4;"></div>
<div style="left:47px;top:351px;width:632px;height:1px;background:#d4d4d4;"></div>
<div style="left:47px;top:371px;width:632px;height:1px;background:#d4d4d4;"></div>
<div style="left:47px;top:391px;width:632px;height:1px;background:#d4d4d4;"></div>
<div style="left:47px;top:411px;width:632px;height:1px;background:#d4d4d4;"></div>
<div style="left:47px;top:431px;width:632px;height:1px;background:#d4d4d4;"></div>
<div style="left:47px;top:451px;width:632px;height:1px;background:#d4d4d4;"></div>
<div style="left:47px;top:471px;width:632px;height:1px;background:#d4d4d4;"></div>
<div style="left:47px;top:491px;width:632px;height:1px;background:#d4d4d4;"></div>
<div style="left:47px;top:511px;width:632px;height:1px;background:#d4d4d4;"></div>
<div style="left:47px;top:531px;width:632px;height:1px;background:#d4d4d4;"></div>
<div style="left:47px;top:551px;width:632px;height:1px;background:#d4d4d4;"></div>
<div style="left:47px;top:571px;width:632px;height:1px;background:#d4d4d4;"></div>
<div style="left:47px;top:591px;width:632px;height:1px;background:#d4d4d4;"></div>
<div style="left:279px;top:252px;width:1px;height:337px;background:#d4d4d4;"></div>
<div style="left:433px;top:252px;width:1px;height:337px;background:#d4d4d4;"></div>
<div style="left:487px;top:252px;width:1px;height:337px;background:#d4d4d4;"></div>
<div style="left:551px;top:252px;width:1px;height:337px;background:#d4d4d4;"></div>
<div style="left:615px;top:252px;width:1px;height:337px;background:#d4d4d4;"></div>
<div style="left:679px;top:252px;width:327px;height:337px;background:#ffc000;"></div>
<div style="left:0px;top:252px;width:46px;height:337px;background:#6a6a6a;"></div>
<div style="left:0px;top:271px;width:46px;height:1px;background:#ababab;"></div>
<div style="left:0px;top:291px;width:46px;height:1px;background:#ababab;"></div>
<div style="left:0px;top:311px;width:46px;height:1px;background:#ababab;"></div>
<div style="left:0px;top:331px;width:46px;height:1px;background:#ababab;"></div>
<div style="left:0px;top:351px;width:46px;height:1px;background:#ababab;"></div>
<div style="left:0px;top:371px;width:46px;height:1px;background:#ababab;"></div>
<div style="left:0px;top:391px;width:46px;height:1px;background:#ababab;"></div>
<div style="left:0px;top:411px;width:46px;height:1px;background:#ababab;"></div>
<div style="left:0px;top:431px;width:46px;height:1px;background:#ababab;"></div>
<div style="left:0px;top:451px;width:46px;height:1px;background:#ababab;"></div>
<div style="left:0px;top:452px;width:46px;height:19px;background:#217346;"></div>
<div style="left:0px;top:471px;width:46px;height:1px;background:#ababab;"></div>
<div style="left:0px;top:491px;width:46px;height:1px;background:#ababab;"></div>
<div style="left:0px;top:511px;width:46px;height:1px;background:#ababab;"></div>
<div style="left:0px;top:531px;width:46px;height:1px;background:#ababab;"></div>
<div style="left:0px;top:551px;width:46px;height:1px;background:#ababab;"></div>
<div style="left:0px;top:571px;width:46px;height:1px;background:#ababab;"></div>
<div style="left:0px;top:591px;width:46px;height:1px;background:#ababab;"></div>
<div style="left:47px;top:452px;width:959px;height:1px;background:#ffffff;"></div>
<div style="left:47px;top:470px;width:959px;height:1px;background:#ffffff;"></div>
<div style="left:279px;top:453px;width:727px;height:17px;background:rgba(0,0,0,0.225);"></div>
<div class="t" style="left:3.05px;top:256.00px;font-size:13px;line-height:13px;color:#ececec;font-family:'Liberation Sans';font-weight:normal;font-style:normal;transform:scaleX(0.9334);transform-origin:0 0;">149788</div>
<div style="left:47px;top:252.00px;width:232px;height:21px;overflow:hidden"><div class="t" style="left:1.50px;top:4px;font-size:13px;line-height:13px;color:#000000;font-family:'Liberation Sans';font-weight:normal;font-style:normal;transform:scaleX(1.0283);transform-origin:0 0;">Livingston, James D.</div></div>
<div style="left:280px;top:252.00px;width:153px;height:21px;overflow:hidden"><div class="t" style="left:1.50px;top:4px;font-size:13px;line-height:13px;color:#000000;font-family:'Liberation Sans';font-weight:normal;font-style:normal;transform:scaleX(1.0526);transform-origin:0 0;">MIT School of Engineering</div></div>
<div class="t" style="left:435.50px;top:256.00px;font-size:13px;line-height:13px;color:#000000;font-family:'Liberation Sans';font-weight:normal;font-style:normal;transform:scaleX(1.0436);transform-origin:0 0;">usa</div>
<div class="t" style="left:535.32px;top:256.00px;font-size:13px;line-height:13px;color:#000000;font-family:'Liberation Sans';font-weight:normal;font-style:normal;transform:scaleX(0.9800);transform-origin:0 0;">96</div>
<div class="t" style="left:585.16px;top:256.00px;font-size:13px;line-height:13px;color:#000000;font-family:'Liberation Sans';font-weight:normal;font-style:normal;transform:scaleX(0.9800);transform-origin:0 0;">1957</div>
<div class="t" style="left:649.16px;top:256.00px;font-size:13px;line-height:13px;color:#000000;font-family:'Liberation Sans';font-weight:normal;font-style:normal;transform:scaleX(0.9800);transform-origin:0 0;">2004</div>
<div class="t" style="left:695.44px;top:256.00px;font-size:13px;line-height:13px;color:#000000;font-family:'Liberation Sans';font-weight:normal;font-style:normal;transform:scaleX(0.9800);transform-origin:0 0;">164,769</div>
<div class="t" style="left:784.23px;top:256.00px;font-size:13px;line-height:13px;color:#000000;font-family:'Liberation Sans';font-weight:normal;font-style:normal;transform:scaleX(0.9800);transform-origin:0 0;">138</div>
<div class="t" style="left:862.41px;top:256.00px;font-size:13px;line-height:13px;color:#000000;font-family:'Liberation Sans';font-weight:normal;font-style:normal;transform:scaleX(0.9800);transform-origin:0 0;">6</div>
<div class="t" style="left:894.53px;top:256.00px;font-size:13px;line-height:13px;color:#000000;font-family:'Liberation Sans';font-weight:normal;font-style:normal;transform:scaleX(0.9800);transform-origin:0 0;">4.5000</div>
<div class="t" style="left:983.32px;top:256.00px;font-size:13px;line-height:13px;color:#000000;font-family:'Liberation Sans';font-weight:normal;font-style:normal;transform:scaleX(0.9800);transform-origin:0 0;">47</div>
<div class="t" style="left:3.05px;top:276.00px;font-size:13px;line-height:13px;color:#ececec;font-family:'Liberation Sans';font-weight:normal;font-style:normal;transform:scaleX(0.9334);transform-origin:0 0;">149789</div>
<div style="left:47px;top:272.00px;width:232px;height:21px;overflow:hidden"><div class="t" style="left:1.50px;top:4px;font-size:13px;line-height:13px;color:#000000;font-family:'Liberation Sans';font-weight:normal;font-style:normal;transform:scaleX(1.0672);transform-origin:0 0;">Wang, Xiaolin</div></div>
<div style="left:280px;top:272.00px;width:153px;height:21px;overflow:hidden"><div class="t" style="left:1.50px;top:4px;font-size:13px;line-height:13px;color:#000000;font-family:'Liberation Sans';font-weight:normal;font-style:normal;transform:scaleX(1.0540);transform-origin:0 0;">Dalian Institute of Chemical Physics</div></div>
<div class="t" style="left:435.50px;top:276.00px;font-size:13px;line-height:13px;color:#000000;font-family:'Liberation Sans';font-weight:normal;font-style:normal;transform:scaleX(1.0998);transform-origin:0 0;">chn</div>
<div class="t" style="left:535.32px;top:276.00px;font-size:13px;line-height:13px;color:#000000;font-family:'Liberation Sans';font-weight:normal;font-style:normal;transform:scaleX(0.9800);transform-origin:0 0;">98</div>
<div class="t" style="left:585.16px;top:276.00px;font-size:13px;line-height:13px;color:#000000;font-family:'Liberation Sans';font-weight:normal;font-style:normal;transform:scaleX(0.9800);transform-origin:0 0;">2010</div>
<div class="t" style="left:649.16px;top:276.00px;font-size:13px;line-height:13px;color:#000000;font-family:'Liberation Sans';font-weight:normal;font-style:normal;transform:scaleX(0.9800);transform-origin:0 0;">2025</div>
<div class="t" style="left:695.44px;top:276.00px;font-size:13px;line-height:13px;color:#000000;font-family:'Liberation Sans';font-weight:normal;font-style:normal;transform:scaleX(0.9800);transform-origin:0 0;">164,770</div>
<div class="t" style="left:774.55px;top:276.00px;font-size:13px;line-height:13px;color:#000000;font-family:'Liberation Sans';font-weight:normal;font-style:normal;transform:scaleX(0.9800);transform-origin:0 0;">1,112</div>
<div class="t" style="left:855.32px;top:276.00px;font-size:13px;line-height:13px;color:#000000;font-family:'Liberation Sans';font-weight:normal;font-style:normal;transform:scaleX(0.9800);transform-origin:0 0;">17</div>
<div class="t" style="left:894.53px;top:276.00px;font-size:13px;line-height:13px;color:#000000;font-family:'Liberation Sans';font-weight:normal;font-style:normal;transform:scaleX(0.9800);transform-origin:0 0;">3.9892</div>
<div class="t" style="left:990.41px;top:276.00px;font-size:13px;line-height:13px;color:#000000;font-family:'Liberation Sans';font-weight:normal;font-style:normal;transform:scaleX(0.9800);transform-origin:0 0;">0</div>
<div class="t" style="left:3.05px;top:296.00px;font-size:13px;line-height:13px;color:#ececec;font-family:'Liberation Sans';font-weight:normal;font-style:normal;transform:scaleX(0.9334);transform-origin:0 0;">149790</div>
<div style="left:47px;top:292.00px;width:232px;height:21px;overflow:hidden"><div class="t" style="left:1.50px;top:4px;font-size:13px;line-height:13px;color:#000000;font-family:'Liberation Sans';font-weight:normal;font-style:normal;transform:scaleX(1.0534);transform-origin:0 0;">Malik, Om Parkash</div></div>
<div style="left:280px;top:292.00px;width:153px;height:21px;overflow:hidden"><div class="t" style="left:1.50px;top:4px;font-size:13px;line-height:13px;color:#000000;font-family:'Liberation Sans';font-weight:normal;font-style:normal;transform:scaleX(1.0622);transform-origin:0 0;">University of Calgary</div></div>
<div class="t" style="left:435.50px;top:296.00px;font-size:13px;line-height:13px;color:#000000;font-family:'Liberation Sans';font-weight:normal;font-style:normal;transform:scaleX(1.0664);transform-origin:0 0;">can</div>
<div class="t" style="left:528.23px;top:296.00px;font-size:13px;line-height:13px;color:#000000;font-family:'Liberation Sans';font-weight:normal;font-style:normal;transform:scaleX(0.9800);transform-origin:0 0;">636</div>
<div class="t" style="left:585.16px;top:296.00px;font-size:13px;line-height:13px;color:#000000;font-family:'Liberation Sans';font-weight:normal;font-style:normal;transform:scaleX(0.9800);transform-origin:0 0;">1972</div>
<div class="t" style="left:649.16px;top:296.00px;font-size:13px;line-height:13px;color:#000000;font-family:'Liberation Sans';font-weight:normal;font-style:normal;transform:scaleX(0.9800);transform-origin:0 0;">2025</div>
<div class="t" style="left:695.44px;top:296.00px;font-size:13px;line-height:13px;color:#000000;font-family:'Liberation Sans';font-weight:normal;font-style:normal;transform:scaleX(0.9800);transform-origin:0 0;">164,773</div>
<div class="t" style="left:784.23px;top:296.00px;font-size:13px;line-height:13px;color:#000000;font-family:'Liberation Sans';font-weight:normal;font-style:normal;transform:scaleX(0.9800);transform-origin:0 0;">795</div>
<div class="t" style="left:856.27px;top:296.00px;font-size:13px;line-height:13px;color:#000000;font-family:'Liberation Sans';font-weight:normal;font-style:normal;transform:scaleX(0.9800);transform-origin:0 0;">11</div>
<div class="t" style="left:894.53px;top:296.00px;font-size:13px;line-height:13px;color:#000000;font-family:'Liberation Sans';font-weight:normal;font-style:normal;transform:scaleX(0.9800);transform-origin:0 0;">6.7401</div>
<div class="t" style="left:983.32px;top:296.00px;font-size:13px;line-height:13px;color:#000000;font-family:'Liberation Sans';font-weight:normal;font-style:normal;transform:scaleX(0.9800);transform-origin:0 0;">20</div>
<div class="t" style="left:3.05px;top:316.00px;font-size:13px;line-height:13px;color:#ececec;font-family:'Liberation Sans';font-weight:normal;font-style:normal;transform:scaleX(0.9334);transform-origin:0 0;">149791</div>
<div style="left:47px;top:312.00px;width:232px;height:21px;overflow:hidden"><div class="t" style="left:1.50px;top:4px;font-size:13px;line-height:13px;color:#000000;font-family:'Liberation Sans';font-weight:normal;font-style:normal;transform:scaleX(1.0488);transform-origin:0 0;">Kita, Yasuyuki</div></div>
<div style="left:280px;top:312.00px;width:153px;height:21px;overflow:hidden"><div class="t" style="left:1.50px;top:4px;font-size:13px;line-height:13px;color:#000000;font-family:'Liberation Sans';font-weight:normal;font-style:normal;transform:scaleX(1.0681);transform-origin:0 0;">Ritsumeikan University Biwako</div></div>
<div class="t" style="left:435.50px;top:316.00px;font-size:13px;line-height:13px;color:#000000;font-family:'Liberation Sans';font-weight:normal;font-style:normal;transform:scaleX(1.1687);transform-origin:0 0;">jpn</div>
<div class="t" style="left:528.23px;top:316.00px;font-size:13px;line-height:13px;color:#000000;font-family:'Liberation Sans';font-weight:normal;font-style:normal;transform:scaleX(0.9800);transform-origin:0 0;">501</div>
<div class="t" style="left:585.16px;top:316.00px;font-size:13px;line-height:13px;color:#000000;font-family:'Liberation Sans';font-weight:normal;font-style:normal;transform:scaleX(0.9800);transform-origin:0 0;">1971</div>
<div class="t" style="left:649.16px;top:316.00px;font-size:13px;line-height:13px;color:#000000;font-family:'Liberation Sans';font-weight:normal;font-style:normal;transform:scaleX(0.9800);transform-origin:0 0;">2025</div>
<div class="t" style="left:695.44px;top:316.00px;font-size:13px;line-height:13px;color:#000000;font-family:'Liberation Sans';font-weight:normal;font-style:normal;transform:scaleX(0.9800);transform-origin:0 0;">164,774</div>
<div class="t" style="left:784.23px;top:316.00px;font-size:13px;line-height:13px;color:#000000;font-family:'Liberation Sans';font-weight:normal;font-style:normal;transform:scaleX(0.9800);transform-origin:0 0;">522</div>
<div class="t" style="left:862.41px;top:316.00px;font-size:13px;line-height:13px;color:#000000;font-family:'Liberation Sans';font-weight:normal;font-style:normal;transform:scaleX(0.9800);transform-origin:0 0;">9</div>
<div class="t" style="left:894.53px;top:316.00px;font-size:13px;line-height:13px;color:#000000;font-family:'Liberation Sans';font-weight:normal;font-style:normal;transform:scaleX(0.9800);transform-origin:0 0;">4.3694</div>
<div class="t" style="left:990.41px;top:316.00px;font-size:13px;line-height:13px;color:#000000;font-family:'Liberation Sans';font-weight:normal;font-style:normal;transform:scaleX(0.9800);transform-origin:0 0;">4</div>
<div class="t" style="left:3.05px;top:336.00px;font-size:13px;line-height:13px;color:#ececec;font-family:'Liberation Sans';font-weight:normal;font-style:normal;transform:scaleX(0.9334);transform-origin:0 0;">149792</div>
<div style="left:47px;top:332.00px;width:232px;height:21px;overflow:hidden"><div class="t" style="left:1.50px;top:4px;font-size:13px;line-height:13px;color:#000000;font-family:'Liberation Sans';font-weight:normal;font-style:normal;transform:scaleX(1.0238);transform-origin:0 0;">Agrawal, Jai Prakash</div></div>
<div style="left:280px;top:332.00px;width:153px;height:21px;overflow:hidden"><div class="t" style="left:1.50px;top:4px;font-size:13px;line-height:13px;color:#000000;font-family:'Liberation Sans';font-weight:normal;font-style:normal;transform:scaleX(1.0508);transform-origin:0 0;">Defence Research and Development</div></div>
<div class="t" style="left:435.50px;top:336.00px;font-size:13px;line-height:13px;color:#000000;font-family:'Liberation Sans';font-weight:normal;font-style:normal;transform:scaleX(1.1602);transform-origin:0 0;">ind</div>
<div class="t" style="left:535.32px;top:336.00px;font-size:13px;line-height:13px;color:#000000;font-family:'Liberation Sans';font-weight:normal;font-style:normal;transform:scaleX(0.9800);transform-origin:0 0;">71</div>
<div class="t" style="left:585.16px;top:336.00px;font-size:13px;line-height:13px;color:#000000;font-family:'Liberation Sans';font-weight:normal;font-style:normal;transform:scaleX(0.9800);transform-origin:0 0;">1982</div>
<div class="t" style="left:649.16px;top:336.00px;font-size:13px;line-height:13px;color:#000000;font-family:'Liberation Sans';font-weight:normal;font-style:normal;transform:scaleX(0.9800);transform-origin:0 0;">2023</div>
<div class="t" style="left:695.44px;top:336.00px;font-size:13px;line-height:13px;color:#000000;font-family:'Liberation Sans';font-weight:normal;font-style:normal;transform:scaleX(0.9800);transform-origin:0 0;">164,775</div>
<div class="t" style="left:784.23px;top:336.00px;font-size:13px;line-height:13px;color:#000000;font-family:'Liberation Sans';font-weight:normal;font-style:normal;transform:scaleX(0.9800);transform-origin:0 0;">136</div>
<div class="t" style="left:862.41px;top:336.00px;font-size:13px;line-height:13px;color:#000000;font-family:'Liberation Sans';font-weight:normal;font-style:normal;transform:scaleX(0.9800);transform-origin:0 0;">5</div>
<div class="t" style="left:894.53px;top:336.00px;font-size:13px;line-height:13px;color:#000000;font-family:'Liberation Sans';font-weight:normal;font-style:normal;transform:scaleX(0.9800);transform-origin:0 0;">4.0000</div>
<div class="t" style="left:990.41px;top:336.00px;font-size:13px;line-height:13px;color:#000000;font-family:'Liberation Sans';font-weight:normal;font-style:normal;transform:scaleX(0.9800);transform-origin:0 0;">5</div>
<div class="t" style="left:3.05px;top:356.00px;font-size:13px;line-height:13px;color:#ececec;font-family:'Liberation Sans';font-weight:normal;font-style:normal;transform:scaleX(0.9334);transform-origin:0 0;">149793</div>
<div style="left:47px;top:352.00px;width:232px;height:21px;overflow:hidden"><div class="t" style="left:1.50px;top:4px;font-size:13px;line-height:13px;color:#000000;font-family:'Liberation Sans';font-weight:normal;font-style:normal;transform:scaleX(1.0734);transform-origin:0 0;">Erro, Roberto</div></div>
<div style="left:280px;top:352.00px;width:153px;height:21px;overflow:hidden"><div class="t" style="left:1.50px;top:4px;font-size:13px;line-height:13px;color:#000000;font-family:'Liberation Sans';font-weight:normal;font-style:normal;transform:scaleX(1.1055);transform-origin:0 0;">Dipartimento di Medicina</div></div>
<div class="t" style="left:435.50px;top:356.00px;font-size:13px;line-height:13px;color:#000000;font-family:'Liberation Sans';font-weight:normal;font-style:normal;transform:scaleX(1.2060);transform-origin:0 0;">ita</div>
<div class="t" style="left:528.23px;top:356.00px;font-size:13px;line-height:13px;color:#000000;font-family:'Liberation Sans';font-weight:normal;font-style:normal;transform:scaleX(0.9800);transform-origin:0 0;">310</div>
<div class="t" style="left:585.16px;top:356.00px;font-size:13px;line-height:13px;color:#000000;font-family:'Liberation Sans';font-weight:normal;font-style:normal;transform:scaleX(0.9800);transform-origin:0 0;">2010</div>
<div class="t" style="left:649.16px;top:356.00px;font-size:13px;line-height:13px;color:#000000;font-family:'Liberation Sans';font-weight:normal;font-style:normal;transform:scaleX(0.9800);transform-origin:0 0;">2025</div>
<div class="t" style="left:695.44px;top:356.00px;font-size:13px;line-height:13px;color:#000000;font-family:'Liberation Sans';font-weight:normal;font-style:normal;transform:scaleX(0.9800);transform-origin:0 0;">164,776</div>
<div class="t" style="left:784.23px;top:356.00px;font-size:13px;line-height:13px;color:#000000;font-family:'Liberation Sans';font-weight:normal;font-style:normal;transform:scaleX(0.9800);transform-origin:0 0;">726</div>
<div class="t" style="left:856.27px;top:356.00px;font-size:13px;line-height:13px;color:#000000;font-family:'Liberation Sans';font-weight:normal;font-style:normal;transform:scaleX(0.9800);transform-origin:0 0;">11</div>
<div class="t" style="left:894.53px;top:356.00px;font-size:13px;line-height:13px;color:#000000;font-family:'Liberation Sans';font-weight:normal;font-style:normal;transform:scaleX(0.9800);transform-origin:0 0;">4.8456</div>
<div class="t" style="left:990.41px;top:356.00px;font-size:13px;line-height:13px;color:#000000;font-family:'Liberation Sans';font-weight:normal;font-style:normal;transform:scaleX(0.9800);transform-origin:0 0;">8</div>
<div class="t" style="left:3.05px;top:376.00px;font-size:13px;line-height:13px;color:#ececec;font-family:'Liberation Sans';font-weight:normal;font-style:normal;transform:scaleX(0.9334);transform-origin:0 0;">149794</div>
<div style="left:47px;top:372.00px;width:232px;height:21px;overflow:hidden"><div class="t" style="left:1.50px;top:4px;font-size:13px;line-height:13px;color:#000000;font-family:'Liberation Sans';font-weight:normal;font-style:normal;transform:scaleX(0.9945);transform-origin:0 0;">Ren, Jie</div></div>
<div style="left:280px;top:372.00px;width:153px;height:21px;overflow:hidden"><div class="t" style="left:1.50px;top:4px;font-size:13px;line-height:13px;color:#000000;font-family:'Liberation Sans';font-weight:normal;font-style:normal;transform:scaleX(1.0950);transform-origin:0 0;">Tongji University</div></div>
<div class="t" style="left:435.50px;top:376.00px;font-size:13px;line-height:13px;color:#000000;font-family:'Liberation Sans';font-weight:normal;font-style:normal;transform:scaleX(1.0998);transform-origin:0 0;">chn</div>
<div class="t" style="left:528.23px;top:376.00px;font-size:13px;line-height:13px;color:#000000;font-family:'Liberation Sans';font-weight:normal;font-style:normal;transform:scaleX(0.9800);transform-origin:0 0;">200</div>
<div class="t" style="left:585.16px;top:376.00px;font-size:13px;line-height:13px;color:#000000;font-family:'Liberation Sans';font-weight:normal;font-style:normal;transform:scaleX(0.9800);transform-origin:0 0;">2003</div>
<div class="t" style="left:649.16px;top:376.00px;font-size:13px;line-height:13px;color:#000000;font-family:'Liberation Sans';font-weight:normal;font-style:normal;transform:scaleX(0.9800);transform-origin:0 0;">2025</div>
<div class="t" style="left:695.44px;top:376.00px;font-size:13px;line-height:13px;color:#000000;font-family:'Liberation Sans';font-weight:normal;font-style:normal;transform:scaleX(0.9800);transform-origin:0 0;">164,777</div>
<div class="t" style="left:784.23px;top:376.00px;font-size:13px;line-height:13px;color:#000000;font-family:'Liberation Sans';font-weight:normal;font-style:normal;transform:scaleX(0.9800);transform-origin:0 0;">677</div>
<div class="t" style="left:855.32px;top:376.00px;font-size:13px;line-height:13px;color:#000000;font-family:'Liberation Sans';font-weight:normal;font-style:normal;transform:scaleX(0.9800);transform-origin:0 0;">13</div>
<div class="t" style="left:894.53px;top:376.00px;font-size:13px;line-height:13px;color:#000000;font-family:'Liberation Sans';font-weight:normal;font-style:normal;transform:scaleX(0.9800);transform-origin:0 0;">6.7846</div>
<div class="t" style="left:990.41px;top:376.00px;font-size:13px;line-height:13px;color:#000000;font-family:'Liberation Sans';font-weight:normal;font-style:normal;transform:scaleX(0.9800);transform-origin:0 0;">0</div>
<div class="t" style="left:3.05px;top:396.00px;font-size:13px;line-height:13px;color:#ececec;font-family:'Liberation Sans';font-weight:normal;font-style:normal;transform:scaleX(0.9334);transform-origin:0 0;">149795</div>
<div style="left:47px;top:392.00px;width:232px;height:21px;overflow:hidden"><div class="t" style="left:1.50px;top:4px;font-size:13px;line-height:13px;color:#000000;font-family:'Liberation Sans';font-weight:normal;font-style:normal;transform:scaleX(1.1004);transform-origin:0 0;">Jutzi, Martin</div></div>
<div style="left:280px;top:392.00px;width:153px;height:21px;overflow:hidden"><div class="t" style="left:1.50px;top:4px;font-size:13px;line-height:13px;color:#000000;font-family:'Liberation Sans';font-weight:normal;font-style:normal;transform:scaleX(1.0831);transform-origin:0 0;">University of Bern</div></div>
<div class="t" style="left:435.50px;top:396.00px;font-size:13px;line-height:13px;color:#000000;font-family:'Liberation Sans';font-weight:normal;font-style:normal;transform:scaleX(1.0798);transform-origin:0 0;">che</div>
<div class="t" style="left:535.32px;top:396.00px;font-size:13px;line-height:13px;color:#000000;font-family:'Liberation Sans';font-weight:normal;font-style:normal;transform:scaleX(0.9800);transform-origin:0 0;">79</div>
<div class="t" style="left:585.16px;top:396.00px;font-size:13px;line-height:13px;color:#000000;font-family:'Liberation Sans';font-weight:normal;font-style:normal;transform:scaleX(0.9800);transform-origin:0 0;">2006</div>
<div class="t" style="left:649.16px;top:396.00px;font-size:13px;line-height:13px;color:#000000;font-family:'Liberation Sans';font-weight:normal;font-style:normal;transform:scaleX(0.9800);transform-origin:0 0;">2025</div>
<div class="t" style="left:695.44px;top:396.00px;font-size:13px;line-height:13px;color:#000000;font-family:'Liberation Sans';font-weight:normal;font-style:normal;transform:scaleX(0.9800);transform-origin:0 0;">164,781</div>
<div class="t" style="left:784.23px;top:396.00px;font-size:13px;line-height:13px;color:#000000;font-family:'Liberation Sans';font-weight:normal;font-style:normal;transform:scaleX(0.9800);transform-origin:0 0;">374</div>
<div class="t" style="left:862.41px;top:396.00px;font-size:13px;line-height:13px;color:#000000;font-family:'Liberation Sans';font-weight:normal;font-style:normal;transform:scaleX(0.9800);transform-origin:0 0;">9</div>
<div class="t" style="left:894.53px;top:396.00px;font-size:13px;line-height:13px;color:#000000;font-family:'Liberation Sans';font-weight:normal;font-style:normal;transform:scaleX(0.9800);transform-origin:0 0;">4.7474</div>
<div class="t" style="left:990.41px;top:396.00px;font-size:13px;line-height:13px;color:#000000;font-family:'Liberation Sans';font-weight:normal;font-style:normal;transform:scaleX(0.9800);transform-origin:0 0;">2</div>
<div class="t" style="left:3.05px;top:416.00px;font-size:13px;line-height:13px;color:#ececec;font-family:'Liberation Sans';font-weight:normal;font-style:normal;transform:scaleX(0.9334);transform-origin:0 0;">149796</div>
<div style="left:47px;top:412.00px;width:232px;height:21px;overflow:hidden"><div class="t" style="left:1.50px;top:4px;font-size:13px;line-height:13px;color:#000000;font-family:'Liberation Sans';font-weight:normal;font-style:normal;transform:scaleX(1.0726);transform-origin:0 0;">Meyer-Hermann, Michael E.</div></div>
<div style="left:280px;top:412.00px;width:153px;height:21px;overflow:hidden"><div class="t" style="left:1.50px;top:4px;font-size:13px;line-height:13px;color:#000000;font-family:'Liberation Sans';font-weight:normal;font-style:normal;transform:scaleX(1.0920);transform-origin:0 0;">Helmholtz Centre for Infection</div></div>
<div class="t" style="left:435.50px;top:416.00px;font-size:13px;line-height:13px;color:#000000;font-family:'Liberation Sans';font-weight:normal;font-style:normal;transform:scaleX(1.1146);transform-origin:0 0;">deu</div>
<div class="t" style="left:528.23px;top:416.00px;font-size:13px;line-height:13px;color:#000000;font-family:'Liberation Sans';font-weight:normal;font-style:normal;transform:scaleX(0.9800);transform-origin:0 0;">169</div>
<div class="t" style="left:585.16px;top:416.00px;font-size:13px;line-height:13px;color:#000000;font-family:'Liberation Sans';font-weight:normal;font-style:normal;transform:scaleX(0.9800);transform-origin:0 0;">1995</div>
<div class="t" style="left:649.16px;top:416.00px;font-size:13px;line-height:13px;color:#000000;font-family:'Liberation Sans';font-weight:normal;font-style:normal;transform:scaleX(0.9800);transform-origin:0 0;">2025</div>
<div class="t" style="left:695.44px;top:416.00px;font-size:13px;line-height:13px;color:#000000;font-family:'Liberation Sans';font-weight:normal;font-style:normal;transform:scaleX(0.9800);transform-origin:0 0;">164,782</div>
<div class="t" style="left:784.23px;top:416.00px;font-size:13px;line-height:13px;color:#000000;font-family:'Liberation Sans';font-weight:normal;font-style:normal;transform:scaleX(0.9800);transform-origin:0 0;">566</div>
<div class="t" style="left:856.27px;top:416.00px;font-size:13px;line-height:13px;color:#000000;font-family:'Liberation Sans';font-weight:normal;font-style:normal;transform:scaleX(0.9800);transform-origin:0 0;">11</div>
<div class="t" style="left:894.53px;top:416.00px;font-size:13px;line-height:13px;color:#000000;font-family:'Liberation Sans';font-weight:normal;font-style:normal;transform:scaleX(0.9800);transform-origin:0 0;">3.9006</div>
<div class="t" style="left:983.32px;top:416.00px;font-size:13px;line-height:13px;color:#000000;font-family:'Liberation Sans';font-weight:normal;font-style:normal;transform:scaleX(0.9800);transform-origin:0 0;">10</div>
<div class="t" style="left:3.05px;top:436.00px;font-size:13px;line-height:13px;color:#ececec;font-family:'Liberation Sans';font-weight:normal;font-style:normal;transform:scaleX(0.9334);transform-origin:0 0;">149797</div>
<div style="left:47px;top:432.00px;width:232px;height:21px;overflow:hidden"><div class="t" style="left:1.50px;top:4px;font-size:13px;line-height:13px;color:#000000;font-family:'Liberation Sans';font-weight:normal;font-style:normal;transform:scaleX(1.0275);transform-origin:0 0;">Schwalbe, Harald J.</div></div>
<div style="left:280px;top:432.00px;width:153px;height:21px;overflow:hidden"><div class="t" style="left:1.50px;top:4px;font-size:13px;line-height:13px;color:#000000;font-family:'Liberation Sans';font-weight:normal;font-style:normal;transform:scaleX(1.0909);transform-origin:0 0;">Goethe-Universität Frankfurt</div></div>
<div class="t" style="left:435.50px;top:436.00px;font-size:13px;line-height:13px;color:#000000;font-family:'Liberation Sans';font-weight:normal;font-style:normal;transform:scaleX(1.1146);transform-origin:0 0;">deu</div>
<div class="t" style="left:528.23px;top:436.00px;font-size:13px;line-height:13px;color:#000000;font-family:'Liberation Sans';font-weight:normal;font-style:normal;transform:scaleX(0.9800);transform-origin:0 0;">503</div>
<div class="t" style="left:585.16px;top:436.00px;font-size:13px;line-height:13px;color:#000000;font-family:'Liberation Sans';font-weight:normal;font-style:normal;transform:scaleX(0.9800);transform-origin:0 0;">1992</div>
<div class="t" style="left:649.16px;top:436.00px;font-size:13px;line-height:13px;color:#000000;font-family:'Liberation Sans';font-weight:normal;font-style:normal;transform:scaleX(0.9800);transform-origin:0 0;">2025</div>
<div class="t" style="left:695.44px;top:436.00px;font-size:13px;line-height:13px;color:#000000;font-family:'Liberation Sans';font-weight:normal;font-style:normal;transform:scaleX(0.9800);transform-origin:0 0;">164,783</div>
<div class="t" style="left:784.23px;top:436.00px;font-size:13px;line-height:13px;color:#000000;font-family:'Liberation Sans';font-weight:normal;font-style:normal;transform:scaleX(0.9800);transform-origin:0 0;">822</div>
<div class="t" style="left:856.27px;top:436.00px;font-size:13px;line-height:13px;color:#000000;font-family:'Liberation Sans';font-weight:normal;font-style:normal;transform:scaleX(0.9800);transform-origin:0 0;">11</div>
<div class="t" style="left:894.53px;top:436.00px;font-size:13px;line-height:13px;color:#000000;font-family:'Liberation Sans';font-weight:normal;font-style:normal;transform:scaleX(0.9800);transform-origin:0 0;">4.9429</div>
<div class="t" style="left:990.41px;top:436.00px;font-size:13px;line-height:13px;color:#000000;font-family:'Liberation Sans';font-weight:normal;font-style:normal;transform:scaleX(0.9800);transform-origin:0 0;">9</div>
<div class="t" style="left:3.05px;top:456.00px;font-size:13px;line-height:13px;color:#ececec;font-family:'Liberation Sans';font-weight:normal;font-style:normal;transform:scaleX(0.9334);transform-origin:0 0;">149798</div>
<div style="left:47px;top:452.00px;width:232px;height:21px;overflow:hidden"><div class="t" style="left:1.50px;top:4px;font-size:13px;line-height:13px;color:#000000;font-family:'Liberation Sans';font-weight:normal;font-style:normal;transform:scaleX(1.0357);transform-origin:0 0;">Hosseini Dehshiri, Seyyed Jalaladdin</div></div>
<div style="left:280px;top:452.00px;width:153px;height:21px;overflow:hidden"><div class="t" style="left:1.50px;top:4px;font-size:13px;line-height:13px;color:#000000;font-family:'Liberation Sans';font-weight:normal;font-style:normal;transform:scaleX(1.0835);transform-origin:0 0;">Allameh Tabataba'i University</div></div>
<div class="t" style="left:435.50px;top:456.00px;font-size:13px;line-height:13px;color:#000000;font-family:'Liberation Sans';font-weight:normal;font-style:normal;transform:scaleX(1.2088);transform-origin:0 0;">irn</div>
<div class="t" style="left:535.32px;top:456.00px;font-size:13px;line-height:13px;color:#000000;font-family:'Liberation Sans';font-weight:normal;font-style:normal;transform:scaleX(0.9800);transform-origin:0 0;">42</div>
<div class="t" style="left:585.16px;top:456.00px;font-size:13px;line-height:13px;color:#000000;font-family:'Liberation Sans';font-weight:normal;font-style:normal;transform:scaleX(0.9800);transform-origin:0 0;">2016</div>
<div class="t" style="left:649.16px;top:456.00px;font-size:13px;line-height:13px;color:#000000;font-family:'Liberation Sans';font-weight:normal;font-style:normal;transform:scaleX(0.9800);transform-origin:0 0;">2025</div>
<div class="t" style="left:695.44px;top:456.00px;font-size:13px;line-height:13px;color:#000000;font-family:'Liberation Sans';font-weight:normal;font-style:normal;transform:scaleX(0.9800);transform-origin:0 0;">164,784</div>
<div class="t" style="left:784.23px;top:456.00px;font-size:13px;line-height:13px;color:#000000;font-family:'Liberation Sans';font-weight:normal;font-style:normal;transform:scaleX(0.9800);transform-origin:0 0;">438</div>
<div class="t" style="left:855.32px;top:456.00px;font-size:13px;line-height:13px;color:#000000;font-family:'Liberation Sans';font-weight:normal;font-style:normal;transform:scaleX(0.9800);transform-origin:0 0;">13</div>
<div class="t" style="left:894.53px;top:456.00px;font-size:13px;line-height:13px;color:#000000;font-family:'Liberation Sans';font-weight:normal;font-style:normal;transform:scaleX(0.9800);transform-origin:0 0;">6.4203</div>
<div class="t" style="left:990.41px;top:456.00px;font-size:13px;line-height:13px;color:#000000;font-family:'Liberation Sans';font-weight:normal;font-style:normal;transform:scaleX(0.9800);transform-origin:0 0;">0</div>
<div class="t" style="left:3.05px;top:476.00px;font-size:13px;line-height:13px;color:#ececec;font-family:'Liberation Sans';font-weight:normal;font-style:normal;transform:scaleX(0.9334);transform-origin:0 0;">149799</div>
<div style="left:47px;top:472.00px;width:232px;height:21px;overflow:hidden"><div class="t" style="left:1.50px;top:4px;font-size:13px;line-height:13px;color:#000000;font-family:'Liberation Sans';font-weight:normal;font-style:normal;transform:scaleX(1.0575);transform-origin:0 0;">Brey, Thomas</div></div>
<div style="left:280px;top:472.00px;width:153px;height:21px;overflow:hidden"><div class="t" style="left:1.50px;top:4px;font-size:13px;line-height:13px;color:#000000;font-family:'Liberation Sans';font-weight:normal;font-style:normal;transform:scaleX(1.0877);transform-origin:0 0;">Universität Oldenburg</div></div>
<div class="t" style="left:435.50px;top:476.00px;font-size:13px;line-height:13px;color:#000000;font-family:'Liberation Sans';font-weight:normal;font-style:normal;transform:scaleX(1.1146);transform-origin:0 0;">deu</div>
<div class="t" style="left:528.23px;top:476.00px;font-size:13px;line-height:13px;color:#000000;font-family:'Liberation Sans';font-weight:normal;font-style:normal;transform:scaleX(0.9800);transform-origin:0 0;">174</div>
<div class="t" style="left:585.16px;top:476.00px;font-size:13px;line-height:13px;color:#000000;font-family:'Liberation Sans';font-weight:normal;font-style:normal;transform:scaleX(0.9800);transform-origin:0 0;">1987</div>
<div class="t" style="left:649.16px;top:476.00px;font-size:13px;line-height:13px;color:#000000;font-family:'Liberation Sans';font-weight:normal;font-style:normal;transform:scaleX(0.9800);transform-origin:0 0;">2025</div>
<div class="t" style="left:695.44px;top:476.00px;font-size:13px;line-height:13px;color:#000000;font-family:'Liberation Sans';font-weight:normal;font-style:normal;transform:scaleX(0.9800);transform-origin:0 0;">164,785</div>
<div class="t" style="left:784.23px;top:476.00px;font-size:13px;line-height:13px;color:#000000;font-family:'Liberation Sans';font-weight:normal;font-style:normal;transform:scaleX(0.9800);transform-origin:0 0;">350</div>
<div class="t" style="left:862.41px;top:476.00px;font-size:13px;line-height:13px;color:#000000;font-family:'Liberation Sans';font-weight:normal;font-style:normal;transform:scaleX(0.9800);transform-origin:0 0;">8</div>
<div class="t" style="left:894.53px;top:476.00px;font-size:13px;line-height:13px;color:#000000;font-family:'Liberation Sans';font-weight:normal;font-style:normal;transform:scaleX(0.9800);transform-origin:0 0;">4.7394</div>
<div class="t" style="left:990.41px;top:476.00px;font-size:13px;line-height:13px;color:#000000;font-family:'Liberation Sans';font-weight:normal;font-style:normal;transform:scaleX(0.9800);transform-origin:0 0;">7</div>
<div class="t" style="left:3.05px;top:496.00px;font-size:13px;line-height:13px;color:#ececec;font-family:'Liberation Sans';font-weight:normal;font-style:normal;transform:scaleX(0.9334);transform-origin:0 0;">149800</div>
<div style="left:47px;top:492.00px;width:232px;height:21px;overflow:hidden"><div class="t" style="left:1.50px;top:4px;font-size:13px;line-height:13px;color:#000000;font-family:'Liberation Sans';font-weight:normal;font-style:normal;transform:scaleX(1.0421);transform-origin:0 0;">Rothrock, Nan E.</div></div>
<div style="left:280px;top:492.00px;width:153px;height:21px;overflow:hidden"><div class="t" style="left:1.50px;top:4px;font-size:13px;line-height:13px;color:#000000;font-family:'Liberation Sans';font-weight:normal;font-style:normal;transform:scaleX(1.1028);transform-origin:0 0;">Northwestern University</div></div>
<div class="t" style="left:435.50px;top:496.00px;font-size:13px;line-height:13px;color:#000000;font-family:'Liberation Sans';font-weight:normal;font-style:normal;transform:scaleX(1.0436);transform-origin:0 0;">usa</div>
<div class="t" style="left:535.32px;top:496.00px;font-size:13px;line-height:13px;color:#000000;font-family:'Liberation Sans';font-weight:normal;font-style:normal;transform:scaleX(0.9800);transform-origin:0 0;">84</div>
<div class="t" style="left:585.16px;top:496.00px;font-size:13px;line-height:13px;color:#000000;font-family:'Liberation Sans';font-weight:normal;font-style:normal;transform:scaleX(0.9800);transform-origin:0 0;">1996</div>
<div class="t" style="left:649.16px;top:496.00px;font-size:13px;line-height:13px;color:#000000;font-family:'Liberation Sans';font-weight:normal;font-style:normal;transform:scaleX(0.9800);transform-origin:0 0;">2025</div>
<div class="t" style="left:695.44px;top:496.00px;font-size:13px;line-height:13px;color:#000000;font-family:'Liberation Sans';font-weight:normal;font-style:normal;transform:scaleX(0.9800);transform-origin:0 0;">164,786</div>
<div class="t" style="left:773.60px;top:496.00px;font-size:13px;line-height:13px;color:#000000;font-family:'Liberation Sans';font-weight:normal;font-style:normal;transform:scaleX(0.9800);transform-origin:0 0;">1,445</div>
<div class="t" style="left:855.32px;top:496.00px;font-size:13px;line-height:13px;color:#000000;font-family:'Liberation Sans';font-weight:normal;font-style:normal;transform:scaleX(0.9800);transform-origin:0 0;">14</div>
<div class="t" style="left:894.53px;top:496.00px;font-size:13px;line-height:13px;color:#000000;font-family:'Liberation Sans';font-weight:normal;font-style:normal;transform:scaleX(0.9800);transform-origin:0 0;">4.1852</div>
<div class="t" style="left:990.41px;top:496.00px;font-size:13px;line-height:13px;color:#000000;font-family:'Liberation Sans';font-weight:normal;font-style:normal;transform:scaleX(0.9800);transform-origin:0 0;">0</div>
<div class="t" style="left:3.05px;top:516.00px;font-size:13px;line-height:13px;color:#ececec;font-family:'Liberation Sans';font-weight:normal;font-style:normal;transform:scaleX(0.9334);transform-origin:0 0;">149801</div>
<div style="left:47px;top:512.00px;width:232px;height:21px;overflow:hidden"><div class="t" style="left:1.50px;top:4px;font-size:13px;line-height:13px;color:#000000;font-family:'Liberation Sans';font-weight:normal;font-style:normal;transform:scaleX(1.0459);transform-origin:0 0;">Lü, Xinyou</div></div>
<div style="left:280px;top:512.00px;width:153px;height:21px;overflow:hidden"><div class="t" style="left:1.50px;top:4px;font-size:13px;line-height:13px;color:#000000;font-family:'Liberation Sans';font-weight:normal;font-style:normal;transform:scaleX(1.0488);transform-origin:0 0;">Huazhong University of Science</div></div>
<div class="t" style="left:435.50px;top:516.00px;font-size:13px;line-height:13px;color:#000000;font-family:'Liberation Sans';font-weight:normal;font-style:normal;transform:scaleX(1.0998);transform-origin:0 0;">chn</div>
<div class="t" style="left:528.23px;top:516.00px;font-size:13px;line-height:13px;color:#000000;font-family:'Liberation Sans';font-weight:normal;font-style:normal;transform:scaleX(0.9800);transform-origin:0 0;">124</div>
<div class="t" style="left:585.16px;top:516.00px;font-size:13px;line-height:13px;color:#000000;font-family:'Liberation Sans';font-weight:normal;font-style:normal;transform:scaleX(0.9800);transform-origin:0 0;">2006</div>
<div class="t" style="left:649.16px;top:516.00px;font-size:13px;line-height:13px;color:#000000;font-family:'Liberation Sans';font-weight:normal;font-style:normal;transform:scaleX(0.9800);transform-origin:0 0;">2025</div>
<div class="t" style="left:695.44px;top:516.00px;font-size:13px;line-height:13px;color:#000000;font-family:'Liberation Sans';font-weight:normal;font-style:normal;transform:scaleX(0.9800);transform-origin:0 0;">164,788</div>
<div class="t" style="left:784.23px;top:516.00px;font-size:13px;line-height:13px;color:#000000;font-family:'Liberation Sans';font-weight:normal;font-style:normal;transform:scaleX(0.9800);transform-origin:0 0;">525</div>
<div class="t" style="left:855.32px;top:516.00px;font-size:13px;line-height:13px;color:#000000;font-family:'Liberation Sans';font-weight:normal;font-style:normal;transform:scaleX(0.9800);transform-origin:0 0;">12</div>
<div class="t" style="left:894.53px;top:516.00px;font-size:13px;line-height:13px;color:#000000;font-family:'Liberation Sans';font-weight:normal;font-style:normal;transform:scaleX(0.9800);transform-origin:0 0;">5.3917</div>
<div class="t" style="left:990.41px;top:516.00px;font-size:13px;line-height:13px;color:#000000;font-family:'Liberation Sans';font-weight:normal;font-style:normal;transform:scaleX(0.9800);transform-origin:0 0;">0</div>
<div class="t" style="left:3.05px;top:536.00px;font-size:13px;line-height:13px;color:#ececec;font-family:'Liberation Sans';font-weight:normal;font-style:normal;transform:scaleX(0.9334);transform-origin:0 0;">149802</div>
<div style="left:47px;top:532.00px;width:232px;height:21px;overflow:hidden"><div class="t" style="left:1.50px;top:4px;font-size:13px;line-height:13px;color:#000000;font-family:'Liberation Sans';font-weight:normal;font-style:normal;transform:scaleX(1.0183);transform-origin:0 0;">Sarma, Sanjay Emani</div></div>
<div style="left:280px;top:532.00px;width:153px;height:21px;overflow:hidden"><div class="t" style="left:1.50px;top:4px;font-size:13px;line-height:13px;color:#000000;font-family:'Liberation Sans';font-weight:normal;font-style:normal;transform:scaleX(1.0526);transform-origin:0 0;">MIT School of Engineering</div></div>
<div class="t" style="left:435.50px;top:536.00px;font-size:13px;line-height:13px;color:#000000;font-family:'Liberation Sans';font-weight:normal;font-style:normal;transform:scaleX(1.0436);transform-origin:0 0;">usa</div>
<div class="t" style="left:528.23px;top:536.00px;font-size:13px;line-height:13px;color:#000000;font-family:'Liberation Sans';font-weight:normal;font-style:normal;transform:scaleX(0.9800);transform-origin:0 0;">186</div>
<div class="t" style="left:585.16px;top:536.00px;font-size:13px;line-height:13px;color:#000000;font-family:'Liberation Sans';font-weight:normal;font-style:normal;transform:scaleX(0.9800);transform-origin:0 0;">1993</div>
<div class="t" style="left:649.16px;top:536.00px;font-size:13px;line-height:13px;color:#000000;font-family:'Liberation Sans';font-weight:normal;font-style:normal;transform:scaleX(0.9800);transform-origin:0 0;">2025</div>
<div class="t" style="left:695.44px;top:536.00px;font-size:13px;line-height:13px;color:#000000;font-family:'Liberation Sans';font-weight:normal;font-style:normal;transform:scaleX(0.9800);transform-origin:0 0;">164,790</div>
<div class="t" style="left:773.60px;top:536.00px;font-size:13px;line-height:13px;color:#000000;font-family:'Liberation Sans';font-weight:normal;font-style:normal;transform:scaleX(0.9800);transform-origin:0 0;">1,869</div>
<div class="t" style="left:855.32px;top:536.00px;font-size:13px;line-height:13px;color:#000000;font-family:'Liberation Sans';font-weight:normal;font-style:normal;transform:scaleX(0.9800);transform-origin:0 0;">10</div>
<div class="t" style="left:894.53px;top:536.00px;font-size:13px;line-height:13px;color:#000000;font-family:'Liberation Sans';font-weight:normal;font-style:normal;transform:scaleX(0.9800);transform-origin:0 0;">4.7333</div>
<div class="t" style="left:990.41px;top:536.00px;font-size:13px;line-height:13px;color:#000000;font-family:'Liberation Sans';font-weight:normal;font-style:normal;transform:scaleX(0.9800);transform-origin:0 0;">3</div>
<div class="t" style="left:3.05px;top:556.00px;font-size:13px;line-height:13px;color:#ececec;font-family:'Liberation Sans';font-weight:normal;font-style:normal;transform:scaleX(0.9334);transform-origin:0 0;">149803</div>
<div style="left:47px;top:552.00px;width:232px;height:21px;overflow:hidden"><div class="t" style="left:1.50px;top:4px;font-size:13px;line-height:13px;color:#000000;font-family:'Liberation Sans';font-weight:normal;font-style:normal;transform:scaleX(1.0478);transform-origin:0 0;">Feroz Mirza, Adeel Feroz</div></div>
<div style="left:280px;top:552.00px;width:153px;height:21px;overflow:hidden"><div class="t" style="left:1.50px;top:4px;font-size:13px;line-height:13px;color:#000000;font-family:'Liberation Sans';font-weight:normal;font-style:normal;transform:scaleX(1.0657);transform-origin:0 0;">Gdańsk University of Technology</div></div>
<div class="t" style="left:435.50px;top:556.00px;font-size:13px;line-height:13px;color:#000000;font-family:'Liberation Sans';font-weight:normal;font-style:normal;transform:scaleX(1.1619);transform-origin:0 0;">pol</div>
<div class="t" style="left:535.32px;top:556.00px;font-size:13px;line-height:13px;color:#000000;font-family:'Liberation Sans';font-weight:normal;font-style:normal;transform:scaleX(0.9800);transform-origin:0 0;">33</div>
<div class="t" style="left:585.16px;top:556.00px;font-size:13px;line-height:13px;color:#000000;font-family:'Liberation Sans';font-weight:normal;font-style:normal;transform:scaleX(0.9800);transform-origin:0 0;">2018</div>
<div class="t" style="left:649.16px;top:556.00px;font-size:13px;line-height:13px;color:#000000;font-family:'Liberation Sans';font-weight:normal;font-style:normal;transform:scaleX(0.9800);transform-origin:0 0;">2025</div>
<div class="t" style="left:695.44px;top:556.00px;font-size:13px;line-height:13px;color:#000000;font-family:'Liberation Sans';font-weight:normal;font-style:normal;transform:scaleX(0.9800);transform-origin:0 0;">164,791</div>
<div class="t" style="left:784.23px;top:556.00px;font-size:13px;line-height:13px;color:#000000;font-family:'Liberation Sans';font-weight:normal;font-style:normal;transform:scaleX(0.9800);transform-origin:0 0;">435</div>
<div class="t" style="left:855.32px;top:556.00px;font-size:13px;line-height:13px;color:#000000;font-family:'Liberation Sans';font-weight:normal;font-style:normal;transform:scaleX(0.9800);transform-origin:0 0;">13</div>
<div class="t" style="left:894.53px;top:556.00px;font-size:13px;line-height:13px;color:#000000;font-family:'Liberation Sans';font-weight:normal;font-style:normal;transform:scaleX(0.9800);transform-origin:0 0;">4.8917</div>
<div class="t" style="left:990.41px;top:556.00px;font-size:13px;line-height:13px;color:#000000;font-family:'Liberation Sans';font-weight:normal;font-style:normal;transform:scaleX(0.9800);transform-origin:0 0;">0</div>
<div class="t" style="left:3.05px;top:576.00px;font-size:13px;line-height:13px;color:#ececec;font-family:'Liberation Sans';font-weight:normal;font-style:normal;transform:scaleX(0.9334);transform-origin:0 0;">149804</div>
<div style="left:47px;top:572.00px;width:232px;height:21px;overflow:hidden"><div class="t" style="left:1.50px;top:4px;font-size:13px;line-height:13px;color:#000000;font-family:'Liberation Sans';font-weight:normal;font-style:normal;transform:scaleX(1.0278);transform-origin:0 0;">Cheng, Qi</div></div>
<div style="left:280px;top:572.00px;width:153px;height:21px;overflow:hidden"><div class="t" style="left:1.50px;top:4px;font-size:13px;line-height:13px;color:#000000;font-family:'Liberation Sans';font-weight:normal;font-style:normal;transform:scaleX(1.0592);transform-origin:0 0;">Qi's Academy Future Bio-Tech</div></div>
<div class="t" style="left:435.50px;top:576.00px;font-size:13px;line-height:13px;color:#000000;font-family:'Liberation Sans';font-weight:normal;font-style:normal;transform:scaleX(1.0998);transform-origin:0 0;">chn</div>
<div class="t" style="left:535.32px;top:576.00px;font-size:13px;line-height:13px;color:#000000;font-family:'Liberation Sans';font-weight:normal;font-style:normal;transform:scaleX(0.9800);transform-origin:0 0;">70</div>
<div class="t" style="left:585.16px;top:576.00px;font-size:13px;line-height:13px;color:#000000;font-family:'Liberation Sans';font-weight:normal;font-style:normal;transform:scaleX(0.9800);transform-origin:0 0;">2008</div>
<div class="t" style="left:649.16px;top:576.00px;font-size:13px;line-height:13px;color:#000000;font-family:'Liberation Sans';font-weight:normal;font-style:normal;transform:scaleX(0.9800);transform-origin:0 0;">2025</div>
<div class="t" style="left:695.44px;top:576.00px;font-size:13px;line-height:13px;color:#000000;font-family:'Liberation Sans';font-weight:normal;font-style:normal;transform:scaleX(0.9800);transform-origin:0 0;">164,792</div>
<div class="t" style="left:784.23px;top:576.00px;font-size:13px;line-height:13px;color:#000000;font-family:'Liberation Sans';font-weight:normal;font-style:normal;transform:scaleX(0.9800);transform-origin:0 0;">402</div>
<div class="t" style="left:855.32px;top:576.00px;font-size:13px;line-height:13px;color:#000000;font-family:'Liberation Sans';font-weight:normal;font-style:normal;transform:scaleX(0.9800);transform-origin:0 0;">10</div>
<div class="t" style="left:894.53px;top:576.00px;font-size:13px;line-height:13px;color:#000000;font-family:'Liberation Sans';font-weight:normal;font-style:normal;transform:scaleX(0.9800);transform-origin:0 0;">5.9792</div>
<div class="t" style="left:990.41px;top:576.00px;font-size:13px;line-height:13px;color:#000000;font-family:'Liberation Sans';font-weight:normal;font-style:normal;transform:scaleX(0.9800);transform-origin:0 0;">1</div>
<div style="left:45px;top:450px;width:961px;height:2px;background:#217346;"></div>
<div style="left:52px;top:471px;width:954px;height:2px;background:#217346;"></div>
<div style="left:45px;top:450px;width:2px;height:22px;background:#217346;"></div>
<div style="left:45px;top:469px;width:6px;height:5px;background:#217346;"></div>
<div style="left:51px;top:469px;width:1px;height:5px;background:#ffffff;"></div>
<div style="left:47px;top:468px;width:4px;height:1px;background:#ffffff;"></div>
</body></html>
